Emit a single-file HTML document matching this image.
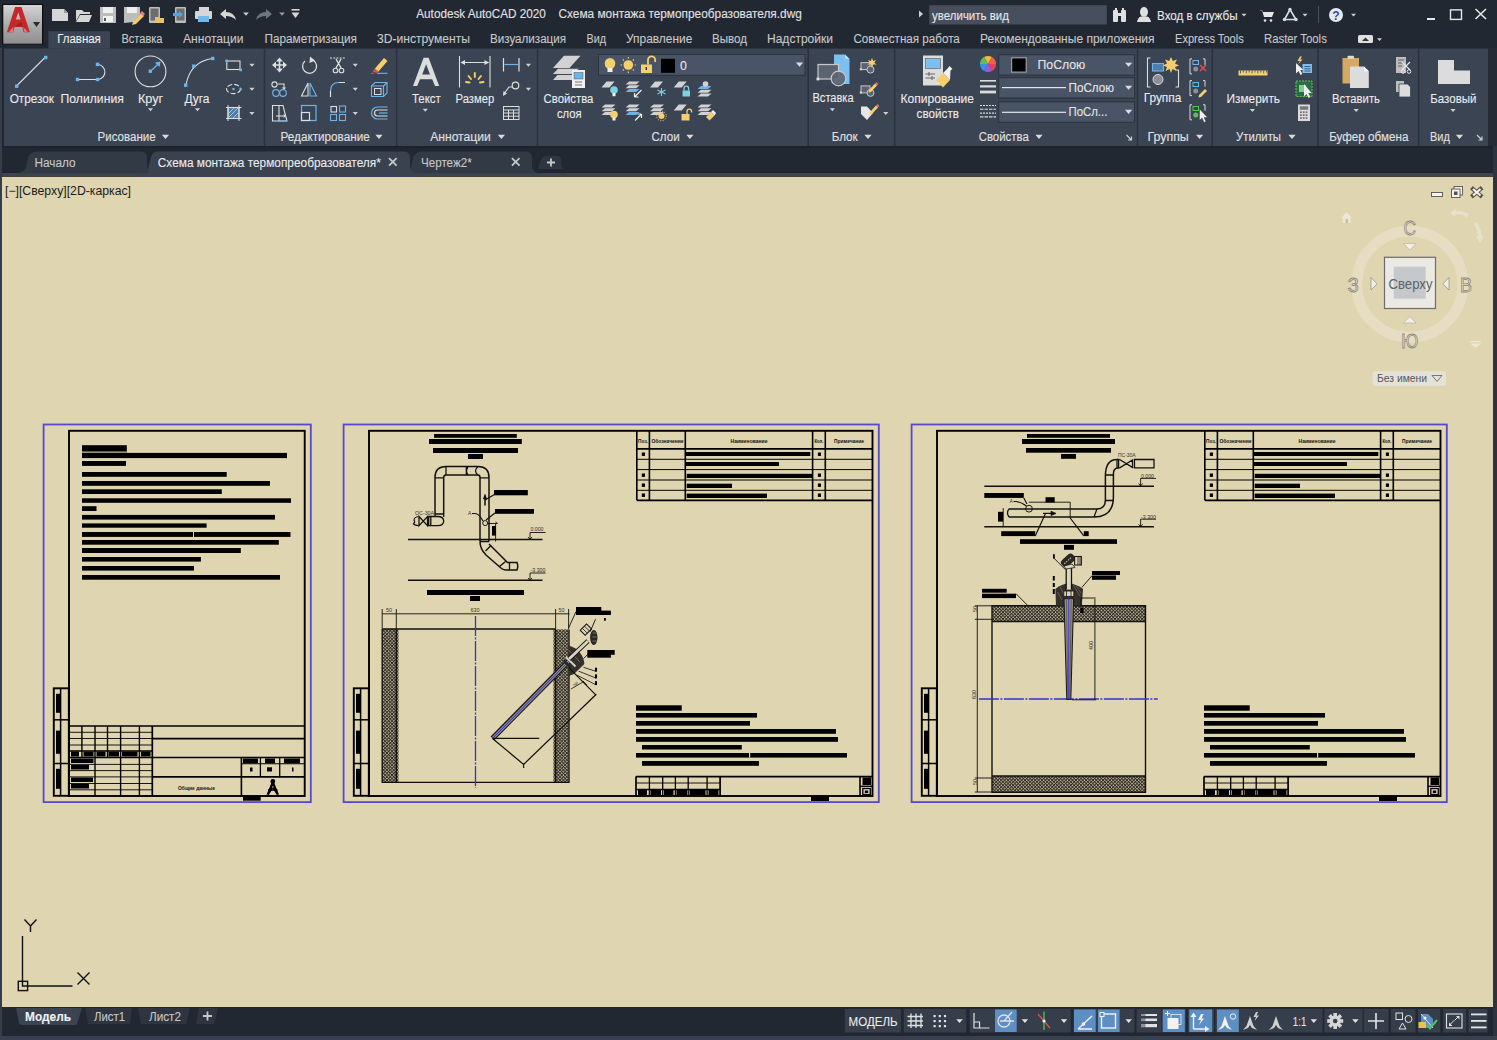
<!DOCTYPE html><html><head><meta charset="utf-8"><style>html,body{margin:0;padding:0;background:#222733;overflow:hidden}svg{display:block}</style></head><body>
<svg width="1497" height="1040" viewBox="0 0 1497 1040" font-family='"Liberation Sans", sans-serif'>
<rect x="0" y="0" width="1497" height="1040" fill="#222832" />
<rect x="0" y="48" width="2" height="992" fill="#363e4b" />
<rect x="4" y="48.5" width="1484" height="97.5" fill="#3b4453" />
<rect x="1488" y="48" width="9" height="98" fill="#262b35" />
<rect x="2" y="146" width="1495" height="31" fill="#222832" />
<rect x="2" y="146" width="1491" height="2" fill="#1d222b" />
<rect x="2" y="171.5" width="1491" height="1.5" fill="#1f2530" />
<rect x="2" y="173" width="1491" height="3.2" fill="#3b4452" />
<rect x="2" y="176.2" width="1491" height="1" fill="#4a463c" />
<rect x="2" y="177" width="1491" height="830" fill="#dfd5b0" />
<rect x="1493" y="146" width="4" height="894" fill="#2d3440" />
<rect x="2" y="1007" width="1491" height="29" fill="#222832" />
<rect x="0" y="1036" width="1497" height="4" fill="#394150" />
<defs><linearGradient id="appg" x1="0" y1="0" x2="0" y2="1"><stop offset="0" stop-color="#d4d4d4"/><stop offset="0.55" stop-color="#a9a9a9"/><stop offset="1" stop-color="#8f8f8f"/></linearGradient><linearGradient id="redA" x1="0" y1="0" x2="1" y2="1"><stop offset="0" stop-color="#e0262b"/><stop offset="1" stop-color="#a81a1e"/></linearGradient></defs>
<rect x="2" y="3.9" width="41.3" height="40.5" fill="#0e0e0e" />
<rect x="3.3" y="5" width="38.7" height="38.7" fill="url(#appg)" />
<path d="M6.9,32.2 L15.1,7.1 L21.5,7.1 L29.9,32.2 L23.6,32.2 L22.2,26.8 L14.6,26.8 L13.4,32.2 Z M15.8,19.5 L20.6,19.5 L18.3,12.4 Z" fill="#c8262a" fill-rule="evenodd"/>
<path d="M9,32 L13.2,27 L13.4,32.2 Z M24.5,32 L23,27 L28,31.5 Z" fill="#e07a78"/><path d="M14.6,26.8 Q18,23 22.2,22 L22.2,26.8 Z" fill="#a81c20"/>
<path d="M33,22 L40,22 L36.5,27 Z" fill="#2a2a2a"/>
<path d="M52,9 L64,9 L68,13 L68,21 L52,21 Z" fill="#d6d6d6"/><path d="M64,9 L64,13 L68,13" fill="#9a9a9a"/>
<path d="M76,10 L82,10 L84,12 L90,12 L90,14 L80,14 L76,21 Z" fill="#d6d6d6"/><path d="M80,15 L92,15 L89,22 L76,22 Z" fill="#d6d6d6"/>
<path d="M100,7 L116,7 L116,23 L100,23 Z" fill="#bdbdbd"/><rect x="103" y="7" width="10" height="6" fill="#eeeeee"/><rect x="103" y="16" width="10" height="6" fill="#f2f2f2"/><rect x="104" y="18" width="2" height="3" fill="#555"/>
<path d="M124,7 L140,7 L140,14 L134,22 L124,23 Z" fill="#bdbdbd"/><rect x="127" y="7" width="10" height="6" fill="#eeeeee"/><path d="M133,22 L141,13 L144,16 L136,24 L132,25 Z" fill="#f2c870"/><path d="M140,13 L142,11 L145,14 L143,16 Z" fill="#e27c8a"/>
<rect x="149" y="7" width="11" height="16" rx="1" fill="#bdbdbd"/><rect x="150.5" y="8.5" width="8" height="12" fill="#6d6d6d"/><path d="M155,17 L159,17 L160,18 L164,18 L164,23 L155,23 Z" fill="#f0c060"/>
<rect x="175" y="7" width="11" height="16" rx="1" fill="#bdbdbd"/><rect x="176.5" y="8.5" width="8" height="12" fill="#6d6d6d"/><path d="M173,13 L179,13 L179,11 L183,14.5 L179,18 L179,16 L173,16 Z" fill="#4aa8e8"/>
<rect x="199" y="7" width="10" height="5" fill="#d6d6d6"/><rect x="195" y="11" width="17" height="8" rx="1" fill="#d6d6d6"/><rect x="198" y="16" width="11" height="6" fill="#72b8ec"/>
<path d="M220,14 L226,9 L226,12 Q234,12 236,20 Q232,16 226,16 L226,19 Z" fill="#d6d6d6"/>
<path d="M243.2,12.46 L248.8,12.46 L246,15.68 Z" fill="#cfcfcf"/>
<path d="M272,14 L266,9 L266,12 Q258,12 256,20 Q260,16 266,16 L266,19 Z" fill="#6f757e"/>
<path d="M279.2,12.46 L284.8,12.46 L282,15.68 Z" fill="#9aa0a8"/>
<rect x="291.5" y="9" width="8" height="1.6" fill="#d6d6d6"/><path d="M291.5,12.5 L299.5,12.5 L295.5,18 Z" fill="#d6d6d6"/>
<text x="416.3" y="18.3" font-size="12.5" fill="#e2e2e2" textLength="129.6" lengthAdjust="spacingAndGlyphs" stroke="#e2e2e2" stroke-width="0.1" >Autodesk AutoCAD 2020</text>
<text x="558.5" y="18.3" font-size="12.5" fill="#e2e2e2" textLength="243.3" lengthAdjust="spacingAndGlyphs" stroke="#e2e2e2" stroke-width="0.1" >Схема монтажа термопреобразователя.dwg</text>
<path d="M919,10.5 L923,14 L919,17.5 Z" fill="#cfcfcf"/>
<rect x="929.2" y="5.2" width="177.6" height="19.3" fill="#474f5e" />
<text x="932" y="19.5" font-size="12.5" fill="#e8e8e8" textLength="77" lengthAdjust="spacingAndGlyphs" stroke="#e8e8e8" stroke-width="0.1" >увеличить вид</text>
<g fill="#e0e0e0"><rect x="1113" y="10" width="5" height="12" rx="1"/><rect x="1121" y="10" width="5" height="12" rx="1"/><rect x="1115" y="8" width="2" height="3"/><rect x="1122" y="8" width="2" height="3"/><rect x="1117" y="13" width="5" height="3"/></g>
<g fill="#e0e0e0"><ellipse cx="1144" cy="12" rx="4" ry="5"/><path d="M1137,22 Q1138,17 1141,16.5 L1147,16.5 Q1150,17 1151,22 Z"/></g>
<text x="1157" y="19.5" font-size="12.5" fill="#e8e8e8" textLength="80.6" lengthAdjust="spacingAndGlyphs" stroke="#e8e8e8" stroke-width="0.1" >Вход в службы</text>
<path d="M1241.5,13.625 L1246.5,13.625 L1244,16.5 Z" fill="#cfcfcf"/>
<g fill="#e6e6e6"><path d="M1259,10 L1262,10 L1264,17 L1272,17 L1274,12 L1263,12 L1262.5,10.5 Z"/><circle cx="1265" cy="20.5" r="1.3"/><circle cx="1271" cy="20.5" r="1.3"/></g>
<g stroke="#d8dce8" stroke-width="1.6" fill="none"><path d="M1290,9.5 L1284.5,19.5 L1296,19.5 Z"/></g><g fill="#d8dce8"><circle cx="1290" cy="9.5" r="1.7"/><circle cx="1284.5" cy="19.5" r="1.7"/><circle cx="1296" cy="19.5" r="1.7"/></g>
<path d="M1302.5,13.625 L1307.5,13.625 L1305,16.5 Z" fill="#cfcfcf"/>
<rect x="1318" y="6" width="1" height="17" fill="#4a505c" />
<circle cx="1336" cy="15" r="7" fill="#e8e8f0"/><text x="1336" y="19.5" font-size="12" font-weight="bold" fill="#2f4fa0" text-anchor="middle">?</text>
<path d="M1351.0,13.625 L1356.0,13.625 L1353.5,16.5 Z" fill="#cfcfcf"/>
<rect x="1427" y="18" width="8" height="2" fill="#e6e6e6" />
<rect x="1450.5" y="9.9" width="11" height="9.5" fill="none" stroke="#e6e6e6" stroke-width="1.4"/>
<path d="M1475.5,9 L1486,19 M1486,9 L1475.5,19" stroke="#e6e6e6" stroke-width="1.6"/>
<rect x="48.4" y="31.2" width="61.6" height="17.5" fill="#3b4453" />
<text x="57.2" y="43.2" font-size="12.5" fill="#f0f0e8" textLength="43.6" lengthAdjust="spacingAndGlyphs" stroke="#f0f0e8" stroke-width="0.1" >Главная</text>
<text x="121.4" y="43.2" font-size="12.5" fill="#c9c9c9" textLength="41.1" lengthAdjust="spacingAndGlyphs" stroke="#c9c9c9" stroke-width="0.1" >Вставка</text>
<text x="183" y="43.2" font-size="12.5" fill="#c9c9c9" textLength="60.5" lengthAdjust="spacingAndGlyphs" stroke="#c9c9c9" stroke-width="0.1" >Аннотации</text>
<text x="264.5" y="43.2" font-size="12.5" fill="#c9c9c9" textLength="92.5" lengthAdjust="spacingAndGlyphs" stroke="#c9c9c9" stroke-width="0.1" >Параметризация</text>
<text x="377" y="43.2" font-size="12.5" fill="#c9c9c9" textLength="93" lengthAdjust="spacingAndGlyphs" stroke="#c9c9c9" stroke-width="0.1" >3D-инструменты</text>
<text x="490" y="43.2" font-size="12.5" fill="#c9c9c9" textLength="76" lengthAdjust="spacingAndGlyphs" stroke="#c9c9c9" stroke-width="0.1" >Визуализация</text>
<text x="586.5" y="43.2" font-size="12.5" fill="#c9c9c9" textLength="19.5" lengthAdjust="spacingAndGlyphs" stroke="#c9c9c9" stroke-width="0.1" >Вид</text>
<text x="626" y="43.2" font-size="12.5" fill="#c9c9c9" textLength="66.3" lengthAdjust="spacingAndGlyphs" stroke="#c9c9c9" stroke-width="0.1" >Управление</text>
<text x="712" y="43.2" font-size="12.5" fill="#c9c9c9" textLength="35" lengthAdjust="spacingAndGlyphs" stroke="#c9c9c9" stroke-width="0.1" >Вывод</text>
<text x="767" y="43.2" font-size="12.5" fill="#c9c9c9" textLength="66" lengthAdjust="spacingAndGlyphs" stroke="#c9c9c9" stroke-width="0.1" >Надстройки</text>
<text x="853.4" y="43.2" font-size="12.5" fill="#c9c9c9" textLength="106.4" lengthAdjust="spacingAndGlyphs" stroke="#c9c9c9" stroke-width="0.1" >Совместная работа</text>
<text x="980" y="43.2" font-size="12.5" fill="#c9c9c9" textLength="174.6" lengthAdjust="spacingAndGlyphs" stroke="#c9c9c9" stroke-width="0.1" >Рекомендованные приложения</text>
<text x="1175" y="43.2" font-size="12.5" fill="#c9c9c9" textLength="68.7" lengthAdjust="spacingAndGlyphs" stroke="#c9c9c9" stroke-width="0.1" >Express Tools</text>
<text x="1264" y="43.2" font-size="12.5" fill="#c9c9c9" textLength="62.8" lengthAdjust="spacingAndGlyphs" stroke="#c9c9c9" stroke-width="0.1" >Raster Tools</text>
<rect x="1358" y="35" width="15" height="8" rx="1.5" fill="#e0e0e0"/><path d="M1362,41 L1365.5,37.5 L1369,41 Z" fill="#333"/>
<path d="M1377.0,38.125 L1382.0,38.125 L1379.5,41.0 Z" fill="#cfcfcf"/>
<rect x="263.75" y="48.5" width="1.5" height="97.5" fill="#2b313c" />
<rect x="395.95" y="48.5" width="1.5" height="97.5" fill="#2b313c" />
<rect x="536.75" y="48.5" width="1.5" height="97.5" fill="#2b313c" />
<rect x="807.45" y="48.5" width="1.5" height="97.5" fill="#2b313c" />
<rect x="893.95" y="48.5" width="1.5" height="97.5" fill="#2b313c" />
<rect x="1136.75" y="48.5" width="1.5" height="97.5" fill="#2b313c" />
<rect x="1211.55" y="48.5" width="1.5" height="97.5" fill="#2b313c" />
<rect x="1317.25" y="48.5" width="1.5" height="97.5" fill="#2b313c" />
<rect x="1417.85" y="48.5" width="1.5" height="97.5" fill="#2b313c" />
<text x="9.7" y="102.9" font-size="12.3" fill="#ececec" textLength="44.3" lengthAdjust="spacingAndGlyphs" stroke="#ececec" stroke-width="0.1" >Отрезок</text>
<text x="60.6" y="102.9" font-size="12.3" fill="#ececec" textLength="63.2" lengthAdjust="spacingAndGlyphs" stroke="#ececec" stroke-width="0.1" >Полилиния</text>
<text x="138" y="102.8" font-size="12.3" fill="#ececec" textLength="25" lengthAdjust="spacingAndGlyphs" stroke="#ececec" stroke-width="0.1" >Круг</text>
<text x="184.5" y="102.8" font-size="12.3" fill="#ececec" textLength="25" lengthAdjust="spacingAndGlyphs" stroke="#ececec" stroke-width="0.1" >Дуга</text>
<text x="411.9" y="102.8" font-size="12.3" fill="#ececec" textLength="28.9" lengthAdjust="spacingAndGlyphs" stroke="#ececec" stroke-width="0.1" >Текст</text>
<text x="455.6" y="102.8" font-size="12.3" fill="#ececec" textLength="38.7" lengthAdjust="spacingAndGlyphs" stroke="#ececec" stroke-width="0.1" >Размер</text>
<text x="543.6" y="102.8" font-size="12.3" fill="#ececec" textLength="49.8" lengthAdjust="spacingAndGlyphs" stroke="#ececec" stroke-width="0.1" >Свойства</text>
<text x="557" y="117.6" font-size="12.3" fill="#ececec" textLength="24.6" lengthAdjust="spacingAndGlyphs" stroke="#ececec" stroke-width="0.1" >слоя</text>
<text x="812.5" y="102.3" font-size="12.3" fill="#ececec" textLength="41.1" lengthAdjust="spacingAndGlyphs" stroke="#ececec" stroke-width="0.1" >Вставка</text>
<text x="900.5" y="102.8" font-size="12.3" fill="#ececec" textLength="73.5" lengthAdjust="spacingAndGlyphs" stroke="#ececec" stroke-width="0.1" >Копирование</text>
<text x="916.6" y="117.8" font-size="12.3" fill="#ececec" textLength="42.4" lengthAdjust="spacingAndGlyphs" stroke="#ececec" stroke-width="0.1" >свойств</text>
<text x="1143.7" y="102.3" font-size="12.3" fill="#ececec" textLength="37.6" lengthAdjust="spacingAndGlyphs" stroke="#ececec" stroke-width="0.1" >Группа</text>
<text x="1226.5" y="102.6" font-size="12.3" fill="#ececec" textLength="53.5" lengthAdjust="spacingAndGlyphs" stroke="#ececec" stroke-width="0.1" >Измерить</text>
<text x="1332" y="102.6" font-size="12.3" fill="#ececec" textLength="48" lengthAdjust="spacingAndGlyphs" stroke="#ececec" stroke-width="0.1" >Вставить</text>
<text x="1430.3" y="102.6" font-size="12.3" fill="#ececec" textLength="46.2" lengthAdjust="spacingAndGlyphs" stroke="#ececec" stroke-width="0.1" >Базовый</text>
<text x="97.6" y="141" font-size="12.3" fill="#e2e2e2" textLength="58" lengthAdjust="spacingAndGlyphs" stroke="#e2e2e2" stroke-width="0.1" >Рисование</text>
<path d="M161.9,134.82000000000002 L169.1,134.82000000000002 L165.5,138.96 Z" fill="#dcdcdc"/>
<text x="280.5" y="141" font-size="12.3" fill="#e2e2e2" textLength="89.2" lengthAdjust="spacingAndGlyphs" stroke="#e2e2e2" stroke-width="0.1" >Редактирование</text>
<path d="M375.4,134.82000000000002 L382.6,134.82000000000002 L379,138.96 Z" fill="#dcdcdc"/>
<text x="430.2" y="141" font-size="12.3" fill="#e2e2e2" textLength="60.5" lengthAdjust="spacingAndGlyphs" stroke="#e2e2e2" stroke-width="0.1" >Аннотации</text>
<path d="M497.79999999999995,134.82000000000002 L505.0,134.82000000000002 L501.4,138.96 Z" fill="#dcdcdc"/>
<text x="651.5" y="141" font-size="12.3" fill="#e2e2e2" textLength="28.1" lengthAdjust="spacingAndGlyphs" stroke="#e2e2e2" stroke-width="0.1" >Слои</text>
<path d="M686.3,134.82000000000002 L693.5,134.82000000000002 L689.9,138.96 Z" fill="#dcdcdc"/>
<text x="831.7" y="141" font-size="12.3" fill="#e2e2e2" textLength="26" lengthAdjust="spacingAndGlyphs" stroke="#e2e2e2" stroke-width="0.1" >Блок</text>
<path d="M864.4,134.82000000000002 L871.6,134.82000000000002 L868,138.96 Z" fill="#dcdcdc"/>
<text x="978.7" y="141" font-size="12.3" fill="#e2e2e2" textLength="50.1" lengthAdjust="spacingAndGlyphs" stroke="#e2e2e2" stroke-width="0.1" >Свойства</text>
<path d="M1035.4,134.82000000000002 L1042.6,134.82000000000002 L1039,138.96 Z" fill="#dcdcdc"/>
<text x="1147.4" y="141" font-size="12.3" fill="#e2e2e2" textLength="41.4" lengthAdjust="spacingAndGlyphs" stroke="#e2e2e2" stroke-width="0.1" >Группы</text>
<path d="M1196.0,134.82000000000002 L1203.1999999999998,134.82000000000002 L1199.6,138.96 Z" fill="#dcdcdc"/>
<text x="1236" y="141" font-size="12.3" fill="#e2e2e2" textLength="45" lengthAdjust="spacingAndGlyphs" stroke="#e2e2e2" stroke-width="0.1" >Утилиты</text>
<path d="M1288.4,134.82000000000002 L1295.6,134.82000000000002 L1292,138.96 Z" fill="#dcdcdc"/>
<text x="1329.2" y="141" font-size="12.3" fill="#e2e2e2" textLength="79.2" lengthAdjust="spacingAndGlyphs" stroke="#e2e2e2" stroke-width="0.1" >Буфер обмена</text>
<text x="1430" y="141" font-size="12.3" fill="#e2e2e2" textLength="19.8" lengthAdjust="spacingAndGlyphs" stroke="#e2e2e2" stroke-width="0.1" >Вид</text>
<path d="M1455.9,134.82000000000002 L1463.1,134.82000000000002 L1459.5,138.96 Z" fill="#dcdcdc"/>
<path d="M147.9,108.27 L153.1,108.27 L150.5,111.26 Z" fill="#d0d0d0"/>
<path d="M194.9,108.27 L200.1,108.27 L197.5,111.26 Z" fill="#d0d0d0"/>
<path d="M422.7,108.77 L427.90000000000003,108.77 L425.3,111.76 Z" fill="#d0d0d0"/>
<path d="M829.8,108.16999999999999 L835.0,108.16999999999999 L832.4,111.16 Z" fill="#d0d0d0"/>
<path d="M1249.8000000000002,108.97 L1255.0,108.97 L1252.4,111.96000000000001 Z" fill="#d0d0d0"/>
<path d="M1353.6000000000001,108.97 L1358.8,108.97 L1356.2,111.96000000000001 Z" fill="#d0d0d0"/>
<path d="M1450.4,108.97 L1455.6,108.97 L1453,111.96000000000001 Z" fill="#d0d0d0"/>
<path d="M1126.5,135 L1131.5,140 M1131.5,136.5 L1131.5,140 L1128.0,140" stroke="#cfcfcf" stroke-width="1.2" fill="none"/>
<path d="M1477,135 L1482,140 M1482,136.5 L1482,140 L1478.5,140" stroke="#cfcfcf" stroke-width="1.2" fill="none"/>
<path d="M17,85.5 L45,57.5" stroke="#dedede" stroke-width="1.1"/>
<rect x="15" y="84.5" width="3.4" height="3.4" fill="#6cb4ec" />
<rect x="44" y="55.8" width="3.4" height="3.4" fill="#6cb4ec" />
<path d="M79,79.5 L96,79.5 M98.5,64.5 A7.6,7.6 0 0 1 98.5,79.5" stroke="#dedede" stroke-width="1.1" fill="none"/>
<rect x="75.8" y="77.8" width="3.4" height="3.4" fill="#6cb4ec" />
<rect x="95.8" y="77.8" width="3.4" height="3.4" fill="#6cb4ec" />
<rect x="95.8" y="62.7" width="3.4" height="3.4" fill="#6cb4ec" />
<circle cx="150.5" cy="71.4" r="15.4" stroke="#dedede" stroke-width="1.1" fill="none"/>
<rect x="148.6" y="69.5" width="3.4" height="3.4" fill="#6cb4ec" />
<path d="M152,70 L159,63" stroke="#6cb4ec" stroke-width="1.3"/><path d="M160.5,61.5 L155,62.5 L159.5,67 Z" fill="#6cb4ec"/>
<path d="M186,85 Q190,62 212,58.5" stroke="#dedede" stroke-width="1.1" fill="none"/>
<rect x="184" y="83.5" width="3.4" height="3.4" fill="#6cb4ec" />
<rect x="192" y="64.5" width="3.4" height="3.4" fill="#6cb4ec" />
<rect x="211" y="56.8" width="3.4" height="3.4" fill="#6cb4ec" />
<rect x="226.8" y="61" width="13.2" height="8.5" fill="none" stroke="#dedede" stroke-width="1.1"/>
<rect x="225.3" y="59.5" width="2.6" height="2.6" fill="#6cb4ec" />
<rect x="239.4" y="68.6" width="2.6" height="2.6" fill="#6cb4ec" />
<ellipse cx="233.5" cy="89" rx="7" ry="4.6" fill="none" stroke="#dedede" stroke-width="1.1" stroke-dasharray="5 2"/>
<rect x="232.4" y="88" width="2.2" height="2.2" fill="#6cb4ec" />
<rect x="239.6" y="88" width="2.2" height="2.2" fill="#6cb4ec" />
<rect x="228" y="107.5" width="11" height="11" fill="#4d7ea8" stroke="#dedede" stroke-width="1.1"/><path d="M226,107.5 L241.5,107.5 M226,118.5 L241.5,118.5 M228,105 L228,121 M239,105 L239,121" stroke="#dedede" stroke-width="1"/><path d="M229,117 L238,108 M229,113 L234,108 M233,118 L238,113" stroke="#9fd0f5" stroke-width="0.9"/>
<path d="M249.3,63.77 L254.5,63.77 L251.9,66.76 Z" fill="#d0d0d0"/>
<path d="M249.3,87.77 L254.5,87.77 L251.9,90.76 Z" fill="#d0d0d0"/>
<path d="M249.3,112.07 L254.5,112.07 L251.9,115.06 Z" fill="#d0d0d0"/>
<g fill="#dedede"><path d="M279.5,57.5 L283,61.5 L276,61.5 Z M279.5,72.5 L283,68.5 L276,68.5 Z M272,65 L276,61.5 L276,68.5 Z M287,65 L283,61.5 L283,68.5 Z"/></g><path d="M279.5,60 L279.5,70 M274.5,65 L284.5,65" stroke="#dedede" stroke-width="1.6"/>
<path d="M313.5,60.5 A7,7 0 1 1 305,61" stroke="#dedede" stroke-width="1.3" fill="none"/><path d="M310,56.5 L315,60.5 L309.5,63 Z" fill="#dedede"/>
<path d="M330,58 L346,58" stroke="#dedede" stroke-width="1.1" stroke-dasharray="2 1.2"/><path d="M336,59 L341,68 M341,59 L336,68" stroke="#dedede" stroke-width="1.4"/><circle cx="335.5" cy="70.5" r="2.3" fill="none" stroke="#dedede" stroke-width="1.1"/><circle cx="341.5" cy="70.5" r="2.3" fill="none" stroke="#dedede" stroke-width="1.1"/>
<path d="M352.7,63.77 L357.90000000000003,63.77 L355.3,66.76 Z" fill="#d0d0d0"/>
<path d="M374.5,69 L384,58 L387.5,61 L378,72 Z" fill="#f5cf6e"/><path d="M372.5,71.5 L375,68.5 L378.5,71.5 L376.5,73 Z" fill="#e0504a"/><path d="M377,73.3 L387.5,73.3" stroke="#6cb4ec" stroke-width="1.1"/><path d="M371,73.3 L374,73.3" stroke="#e0504a" stroke-width="1.1"/>
<g fill="none" stroke="#dedede" stroke-width="1.1"><circle cx="274.5" cy="84.5" r="2.6"/><path d="M278,84 L284,84 L284,88.5"/></g><path d="M282,87.5 L286,87.5 L284,90 Z" fill="#dedede"/><g fill="none" stroke="#6cb4ec" stroke-width="1.2"><circle cx="276" cy="93" r="3.3"/><circle cx="283" cy="93" r="3.3"/></g>
<path d="M308,83 L308,96 L301.5,96 Z" fill="none" stroke="#dedede" stroke-width="1.1"/><path d="M310,83 L316.5,96 L310,96 Z" fill="none" stroke="#6cb4ec" stroke-width="1.1"/>
<path d="M330.5,97 L330.5,91 Q330.5,82.5 339,82.5 L345,82.5" fill="none" stroke="#6cb4ec" stroke-width="1.2"/><path d="M339,82.5 L345,82.5 M330.5,91 L330.5,97" stroke="#dedede" stroke-width="1.1"/>
<path d="M352.7,87.77 L357.90000000000003,87.77 L355.3,90.76 Z" fill="#d0d0d0"/>
<g fill="none" stroke="#6cb4ec" stroke-width="1.1"><path d="M371.5,86 L375,82.5 L387,82.5 L387,93 L383.5,96.5 L371.5,96.5 Z"/><path d="M371.5,86 L383.5,86 L383.5,96.5 M383.5,86 L387,82.5"/></g><rect x="374.5" y="88.5" width="6.5" height="6" fill="none" stroke="#dedede" stroke-width="1"/>
<path d="M272.5,105.5 L279,105.5 L279,121 L272.5,121 Z M279,105.5 L283,105.5 L287,121 L279,121" fill="none" stroke="#dedede" stroke-width="1.1"/><path d="M276,116 L283,116" stroke="#dedede" stroke-width="1.1"/><path d="M283.5,114 L286,116 L283.5,118 Z" fill="#dedede"/><path d="M279,121 L287,121" stroke="#6cb4ec" stroke-width="1.2"/>
<rect x="301.5" y="105.5" width="14.5" height="15" fill="none" stroke="#6cb4ec" stroke-width="1.2"/><rect x="301.5" y="112.5" width="8" height="8" fill="none" stroke="#dedede" stroke-width="1.2"/>
<rect x="331" y="106.5" width="5.5" height="5.5" fill="none" stroke="#dedede" stroke-width="1.1"/><g fill="none" stroke="#6cb4ec" stroke-width="1.1"><rect x="330.5" y="106" width="0" height="0"/><rect x="339.5" y="106" width="6" height="6"/><rect x="330.5" y="114.5" width="6" height="6"/><rect x="339.5" y="114.5" width="6" height="6"/></g>
<path d="M352.7,112.07 L357.90000000000003,112.07 L355.3,115.06 Z" fill="#d0d0d0"/>
<g fill="none" stroke-width="1.2"><path d="M387.5,107 L377.5,107 A6,6 0 0 0 377.5,119 L387.5,119" stroke="#6cb4ec"/><path d="M387.5,110 L377.5,110 A3,3 0 0 0 377.5,116 L387.5,116" stroke="#dedede"/><path d="M387.5,113 L379,113" stroke="#6cb4ec"/><path d="M387.5,104.5 L377.5,104.5" stroke="none"/></g>
<path d="M413,86 L423.6,57.8 L428.6,57.8 L439.2,86 L435,86 L432.2,79.2 L420,79.2 L417.2,86 Z M422.2,74.6 L430,74.6 L426.1,64.3 Z" fill="#dcdcdc" fill-rule="evenodd"/>
<g stroke="#dedede" stroke-width="1.1"><path d="M459.5,56 L459.5,87.5 M490,56 L490,87.5 M461,62.5 L488.5,62.5"/></g><g fill="#dedede"><path d="M460.5,62.5 L465,60 L465,65 Z M489,62.5 L484.5,60 L484.5,65 Z"/></g>
<g stroke="#f5cf6e" stroke-width="1.9" stroke-linecap="round"><path d="M474.8,73 L474.8,77 M468.5,76 L471,79 M481,76 L478.5,79 M466,82 L469.5,82.5 M483.5,82 L480,82.5"/></g>
<path d="M503.5,58 L503.5,71.5 M519,58 L519,71.5" stroke="#dedede" stroke-width="1.2"/><path d="M504.5,64.5 L518,64.5" stroke="#6cb4ec" stroke-width="1.2"/>
<circle cx="515.5" cy="85.5" r="3.3" fill="none" stroke="#dedede" stroke-width="1.2"/><path d="M512.5,87 L509,87 L503.5,94.5" fill="none" stroke="#dedede" stroke-width="1.2"/><path d="M503,96 L503.5,91 L507,93.5 Z" fill="#dedede"/>
<g fill="none" stroke="#dedede" stroke-width="1"><rect x="503.5" y="106.5" width="15.5" height="13"/><path d="M503.5,110 L519,110 M503.5,113 L519,113 M503.5,116.2 L519,116.2 M508.5,110 L508.5,119.5 M513.5,110 L513.5,119.5"/></g>
<path d="M525.8,63.77 L531.0,63.77 L528.4,66.76 Z" fill="#d0d0d0"/>
<path d="M525.8,87.77 L531.0,87.77 L528.4,90.76 Z" fill="#d0d0d0"/>
<g fill="#d2d2d2"><path d="M553,68 L564,55.8 L580.5,55.8 L569.5,68 Z"/><path d="M553,74 L558,68.8 L579,68.8 L572,74 Z"/><path d="M553,80 L557.5,75 L572,75 L572,80 Z"/></g>
<rect x="572" y="70" width="13" height="18" fill="#f0f0f0"/><rect x="574" y="72.5" width="9" height="6.5" fill="#6cb4ec" stroke="#555" stroke-width="0.5"/><path d="M575,82 L582,82 M575,85 L582,85" stroke="#555" stroke-width="0.8"/>
<rect x="598" y="54" width="207.5" height="21.8" fill="#2c333e" />
<rect x="599" y="55" width="205.5" height="19.8" fill="#4a5467" />
<ellipse cx="610" cy="63.5" rx="5.3" ry="5.5" fill="#f5cf6e"/><rect x="607.5" y="68" width="5" height="4" fill="#f0f0f0"/>
<circle cx="628.3" cy="65" r="4.8" fill="#f5cf6e"/><g stroke="#f5cf6e" stroke-width="1.1"><path d="M628.3,57 L628.3,58.5 M628.3,71.5 L628.3,73 M620.5,65 L622,65 M634.5,65 L636,65 M622.8,59.5 L623.8,60.5 M632.8,69.5 L633.8,70.5 M633.8,59.5 L632.8,60.5 M623.8,69.5 L622.8,70.5"/></g>
<rect x="641" y="64.5" width="11" height="8.5" fill="#f5cf6e"/><path d="M648,64.5 L648,60 A3.6,3.6 0 0 1 655.2,60 L655.2,62" fill="none" stroke="#f5cf6e" stroke-width="1.8"/><rect x="645.6" y="67" width="1.4" height="3" fill="#333"/>
<rect x="661" y="58.8" width="14" height="14" fill="#000" />
<text x="680" y="69.8" font-size="12.3" fill="#e6e6e6" stroke="#e6e6e6" stroke-width="0.1" >0</text>
<path d="M795.9,62.52 L803.1,62.52 L799.5,66.66 Z" fill="#dcdcdc"/>
<path d="M601.5,87.5 L606.5,81.5 L614.5,81.5 L609.5,87.5 Z" fill="#d2d2d2"/>
<circle cx="614" cy="90" r="3.8" fill="#7dd3e0"/><rect x="612.5" y="93" width="3" height="3.2" fill="#f0f0f0"/>
<path d="M625.6,84.5 L629.1,81.5 L639.6,81.5 L636.1,84.5 Z" fill="#d2d2d2"/>
<path d="M625.6,88.3 L629.1,85.3 L639.6,85.3 L636.1,88.3 Z" fill="#d2d2d2"/>
<path d="M625.6,92.1 L629.1,89.1 L639.6,89.1 L636.1,92.1 Z" fill="#6cb4ec"/>
<path d="M641.5,90 L634.5,97 M634.5,97 L634.5,93 M634.5,97 L638.5,97" stroke="#f0f0f0" stroke-width="1.2" fill="none"/>
<path d="M650,87.5 L655,81.5 L663,81.5 L658,87.5 Z" fill="#d2d2d2"/>
<g stroke="#7dd3e0" stroke-width="1.1"><path d="M661.5,88 L661.5,96 M657.5,90 L665.5,94 M665.5,90 L657.5,94"/></g>
<path d="M673.7,87.5 L678.7,81.5 L686.7,81.5 L681.7,87.5 Z" fill="#d2d2d2"/>
<rect x="682.5" y="90.5" width="7.5" height="6" fill="#7dd3e0"/><path d="M684,90.5 L684,88.5 A2.3,2.3 0 0 1 688.6,88.5 L688.6,90.5" fill="none" stroke="#7dd3e0" stroke-width="1.3"/>
<path d="M697.5,89.0 L701.0,86.0 L711.5,86.0 L708.0,89.0 Z" fill="#6cb4ec"/>
<path d="M697.5,92.8 L701.0,89.8 L711.5,89.8 L708.0,92.8 Z" fill="#d2d2d2"/>
<path d="M697.5,96.6 L701.0,93.6 L711.5,93.6 L708.0,96.6 Z" fill="#d2d2d2"/>
<circle cx="705.5" cy="84" r="2.8" fill="#d2d2d2"/>
<path d="M601.5,107.5 L605.0,104.5 L615.5,104.5 L612.0,107.5 Z" fill="#d2d2d2"/>
<path d="M601.5,111.3 L605.0,108.3 L615.5,108.3 L612.0,111.3 Z" fill="#d2d2d2"/>
<path d="M601.5,115.1 L605.0,112.1 L615.5,112.1 L612.0,115.1 Z" fill="#d2d2d2"/>
<circle cx="614" cy="114.5" r="3.8" fill="#f5cf6e"/><rect x="612.5" y="117.5" width="3" height="3" fill="#f0f0f0"/>
<path d="M625.6,107.5 L629.1,104.5 L639.6,104.5 L636.1,107.5 Z" fill="#d2d2d2"/>
<path d="M625.6,111.3 L629.1,108.3 L639.6,108.3 L636.1,111.3 Z" fill="#d2d2d2"/>
<path d="M625.6,115.1 L629.1,112.1 L639.6,112.1 L636.1,115.1 Z" fill="#6cb4ec"/>
<path d="M635,120.5 L641.5,114 M641.5,114 L641.5,118 M641.5,114 L637.5,114" stroke="#f0f0f0" stroke-width="1.2" fill="none"/>
<path d="M650,107.5 L653.5,104.5 L664,104.5 L660.5,107.5 Z" fill="#d2d2d2"/>
<path d="M650,111.3 L653.5,108.3 L664,108.3 L660.5,111.3 Z" fill="#d2d2d2"/>
<path d="M650,115.1 L653.5,112.1 L664,112.1 L660.5,115.1 Z" fill="#d2d2d2"/>
<circle cx="661.5" cy="116" r="3" fill="#f5cf6e"/><circle cx="661.5" cy="116" r="4.8" fill="none" stroke="#f5cf6e" stroke-width="0.9" stroke-dasharray="1.2 1.3"/>
<path d="M673.7,110.5 L678.7,104.5 L686.7,104.5 L681.7,110.5 Z" fill="#d2d2d2"/>
<rect x="681.5" y="114" width="8" height="6.5" fill="#f5cf6e"/><path d="M687,114 L687,111.5 A2.3,2.3 0 0 1 691.6,111.5 L691.6,112.5" fill="none" stroke="#f5cf6e" stroke-width="1.3"/>
<path d="M697.5,107.5 L701.0,104.5 L711.5,104.5 L708.0,107.5 Z" fill="#d2d2d2"/>
<path d="M697.5,111.3 L701.0,108.3 L711.5,108.3 L708.0,111.3 Z" fill="#d2d2d2"/>
<path d="M697.5,115.1 L701.0,112.1 L711.5,112.1 L708.0,115.1 Z" fill="#d2d2d2"/>
<path d="M706,117 L711,112 L714.5,115.5 L709.5,120.5 Z" fill="#f5cf6e"/><path d="M711,112 L713,110 L716,113 L714.5,115.5 Z" fill="#f0f0f0"/>
<path d="M834,54.5 L845,54.5 L849.5,59 L849.5,84 L834,84 Z" fill="#7cc0f2"/><path d="M845,54.5 L845,59 L849.5,59" fill="#b9ddf7"/>
<rect x="818" y="64.5" width="20.5" height="14.5" fill="#5c6370" stroke="#c8c8c8" stroke-width="1.2"/><circle cx="838.5" cy="78.5" r="7.3" fill="#5c6370" fill-opacity="0.9" stroke="#c8c8c8" stroke-width="1.2"/>
<rect x="816.5" y="77.6" width="2.8" height="2.8" fill="#e0e0e0" />
<rect x="861" y="62.6" width="9" height="7" fill="#5c6370" stroke="#c8c8c8" stroke-width="1"/><circle cx="870.5" cy="69.6" r="3.5" fill="#5c6370" stroke="#c8c8c8" stroke-width="1"/>
<rect x="861" y="85.9" width="9" height="7" fill="#5c6370" stroke="#c8c8c8" stroke-width="1"/><circle cx="870.5" cy="92.9" r="3.5" fill="#5c6370" stroke="#c8c8c8" stroke-width="1"/>
<rect x="859.8" y="68.3" width="2" height="2" fill="#e0e0e0" />
<rect x="859.8" y="91.5" width="2" height="2" fill="#e0e0e0" />
<path d="M872,58 L873.2,61 L876,60 L874.3,62.8 L876.5,64.5 L873.2,64.5 L872,67.5 L870.8,64.5 L867.5,64.5 L869.7,62.8 L868,60 L870.8,61 Z" fill="#f5cf6e"/>
<path d="M869,90 L875,83.5 L877,85.5 L871,92 L868.5,92.5 Z" fill="#f5cf6e"/><path d="M875,83.5 L876.5,82 L878.5,84 L877,85.5 Z" fill="#e07070"/>
<path d="M861,106.5 L867,106.5 L873,113 L867,120 L861,114 Z" fill="#e6e6e6"/><path d="M870,112 L876,105.5 L878,107.5 L872,114 L869.5,114.5 Z" fill="#f5cf6e"/><path d="M876,105.5 L877.5,104 L879.5,106 L878,107.5 Z" fill="#e07070"/>
<path d="M883.1999999999999,112.07 L888.4,112.07 L885.8,115.06 Z" fill="#d0d0d0"/>
<rect x="923" y="55.5" width="20" height="30" fill="#dcdcdc"/><rect x="925.5" y="58.5" width="15" height="10" fill="#7cc0f2" stroke="#555" stroke-width="0.6"/><path d="M925.5,74 L935,74 M925.5,78 L935,78 M929,72 L929,76 M932,76 L932,80" stroke="#555" stroke-width="0.9"/>
<path d="M936,80 L943,73 L950,80 L943,87.5 Z" fill="#f5cf6e"/><path d="M943,73 L948,68 L949.5,66 L952.5,69 L950.5,70.5 L950,80 Z" fill="#f0f0f0"/>
<g transform="translate(988,64)"><path d="M0,0 L-3.9999999999999982,-6.92820323027551 A8,8 0 0 1 4.000000000000001,-6.928203230275509 Z" fill="#f5b83c"/><path d="M0,0 L4.000000000000001,-6.928203230275509 A8,8 0 0 1 8.0,0.0 Z" fill="#f0604a"/><path d="M0,0 L8.0,0.0 A8,8 0 0 1 4.000000000000001,6.928203230275509 Z" fill="#e84060"/><path d="M0,0 L4.000000000000001,6.928203230275509 A8,8 0 0 1 -3.9999999999999982,6.92820323027551 Z" fill="#9a5ae0"/><path d="M0,0 L-3.9999999999999982,6.92820323027551 A8,8 0 0 1 -8.0,9.797174393178826e-16 Z" fill="#3a90e8"/><path d="M0,0 L-8.0,9.797174393178826e-16 A8,8 0 0 1 -4.0000000000000036,-6.928203230275507 Z" fill="#5ac05a"/></g>
<rect x="980" y="80.0" width="16" height="1.6" fill="#dcdcdc" />
<rect x="980" y="85.3" width="16" height="2.2" fill="#dcdcdc" />
<rect x="980" y="90.6" width="16" height="2.8" fill="#dcdcdc" />
<path d="M980,105.5 L996,105.5" stroke="#dcdcdc" stroke-width="1.1" stroke-dasharray="2 1"/>
<path d="M980,109.3 L996,109.3" stroke="#dcdcdc" stroke-width="1.1" stroke-dasharray="3.5 1"/>
<path d="M980,113.1 L996,113.1" stroke="#dcdcdc" stroke-width="1.1" stroke-dasharray="2 1"/>
<path d="M980,116.9 L996,116.9" stroke="#dcdcdc" stroke-width="1.1" stroke-dasharray="3.5 1"/>
<rect x="998.2" y="54.2" width="136.8" height="21.4" fill="#2c333e" />
<rect x="999.2" y="55.2" width="134.8" height="19.4" fill="#4a5467" />
<path d="M1125.0,62.720000000000006 L1132.1999999999998,62.720000000000006 L1128.6,66.86 Z" fill="#dcdcdc"/>
<rect x="998.2" y="77.2" width="136.8" height="21.4" fill="#2c333e" />
<rect x="999.2" y="78.2" width="134.8" height="19.4" fill="#4a5467" />
<path d="M1125.0,85.72 L1132.1999999999998,85.72 L1128.6,89.86 Z" fill="#dcdcdc"/>
<rect x="998.2" y="101.3" width="136.8" height="21.4" fill="#2c333e" />
<rect x="999.2" y="102.3" width="134.8" height="19.4" fill="#4a5467" />
<path d="M1125.0,109.82 L1132.1999999999998,109.82 L1128.6,113.96 Z" fill="#dcdcdc"/>
<rect x="1011" y="57.2" width="15.8" height="15.5" fill="#9a9a9a" />
<rect x="1012.2" y="58.4" width="13.4" height="13.1" fill="#000" />
<text x="1037.6" y="68.9" font-size="12.3" fill="#e6e6e6" textLength="47.6" lengthAdjust="spacingAndGlyphs" stroke="#e6e6e6" stroke-width="0.1" >ПоСлою</text>
<rect x="1002" y="87" width="64" height="1.2" fill="#e6e6e6" />
<text x="1068.5" y="91.8" font-size="12.3" fill="#e6e6e6" textLength="45.5" lengthAdjust="spacingAndGlyphs" stroke="#e6e6e6" stroke-width="0.1" >ПоСлою</text>
<rect x="1002" y="111.7" width="64" height="1.2" fill="#e6e6e6" />
<text x="1068.5" y="116" font-size="12.3" fill="#e6e6e6" textLength="38.8" lengthAdjust="spacingAndGlyphs" stroke="#e6e6e6" stroke-width="0.1" >ПоСл...</text>
<path d="M1150.5,58 L1147.5,58 L1147.5,87 L1150.5,87 M1175.5,70 L1178.5,70 L1178.5,87 L1175.5,87" fill="none" stroke="#dcdcdc" stroke-width="1.1"/>
<rect x="1152.5" y="63.5" width="11" height="7.5" fill="#4d7ea8" stroke="#6cb4ec" stroke-width="1.1"/><circle cx="1158" cy="79.5" r="5" fill="#8a8f98" stroke="#dcdcdc" stroke-width="1"/>
<path d="M1171,57 L1172.8,61 L1177,59.5 L1175,63.5 L1179,65.5 L1175,67 L1176.5,71 L1172.5,69 L1171,73 L1169.5,69 L1165.5,71 L1167,67 L1163,65.5 L1167,63.5 L1165,59.5 L1169.2,61 Z" fill="#f5cf6e"/>
<path d="M1192,58.9 L1190,58.9 L1190,73.9 L1192,73.9 M1203,58.9 L1205,58.9 L1205,64.9" fill="none" stroke="#dcdcdc" stroke-width="1"/>
<path d="M1192,80.6 L1190,80.6 L1190,95.6 L1192,95.6 M1203,80.6 L1205,80.6 L1205,86.6" fill="none" stroke="#dcdcdc" stroke-width="1"/>
<path d="M1192,104.8 L1190,104.8 L1190,119.8 L1192,119.8 M1203,104.8 L1205,104.8 L1205,110.8" fill="none" stroke="#dcdcdc" stroke-width="1"/>
<rect x="1193" y="60.5" width="5.5" height="4" fill="none" stroke="#6cb4ec" stroke-width="1"/><circle cx="1195.7" cy="69" r="2.5" fill="#8a8f98"/><path d="M1200,65 L1206,71 M1206,65 L1200,71" stroke="#e04a4a" stroke-width="1.6"/>
<rect x="1193" y="82.5" width="5.5" height="4" fill="none" stroke="#6cb4ec" stroke-width="1"/><circle cx="1195.7" cy="91" r="2.5" fill="#8a8f98"/><path d="M1199,95 L1205,89 L1207,91 L1201,97 L1198.5,97.5 Z" fill="#f5cf6e"/>
<rect x="1193" y="106.5" width="5.5" height="4" fill="none" stroke="#5ac05a" stroke-width="1"/><circle cx="1195.7" cy="115" r="2.5" fill="#5ac05a"/><path d="M1199.5,109 L1199.5,120.5 L1202,118 L1204,122.5 L1206,121.5 L1204,117.5 L1207.5,117.5 Z" fill="#f0f0f0" stroke="#333" stroke-width="0.4"/>
<rect x="1238.5" y="70.5" width="29" height="5" fill="#f5cf6e" />
<path d="M1240.5,70.5 L1240.5,73.3 M1243.4,70.5 L1243.4,72.5 M1246.3,70.5 L1246.3,73.3 M1249.2,70.5 L1249.2,72.5 M1252.1,70.5 L1252.1,73.3 M1255.0,70.5 L1255.0,72.5 M1257.9,70.5 L1257.9,73.3 M1260.8,70.5 L1260.8,72.5 M1263.7,70.5 L1263.7,73.3 M1266.6,70.5 L1266.6,72.5" stroke="#3b4453" stroke-width="0.8"/>
<path d="M1296,63 L1296,73.5 L1298.5,71 L1300.5,75 L1302.3,74 L1300.3,70 L1303.5,70 Z" fill="#f0f0f0"/><rect x="1302.5" y="64" width="9.5" height="9" fill="#7cc0f2"/><path d="M1304.5,66.5 L1310.5,66.5 M1304.5,68.8 L1310.5,68.8 M1304.5,71 L1310.5,71" stroke="#3b4453" stroke-width="0.8"/><path d="M1300,56.5 L1297.5,61 L1300,61 L1298,64.5 L1302.5,59.5 L1300.2,59.5 L1302,56.5 Z" fill="#f5cf6e"/>
<rect x="1296" y="81" width="16" height="15.5" fill="#2c6b4a" stroke="#5ac05a" stroke-width="1" stroke-dasharray="2 1"/><path d="M1299,85 L1306,85 L1306,92 L1299,92 Z" fill="#7ad08a"/><path d="M1304,84 L1304,96.5 L1306.5,94 L1308.5,98 L1310.3,97 L1308.3,93 L1311.5,93 Z" fill="#f0f0f0"/>
<rect x="1298" y="104.5" width="12" height="16.5" fill="#dcdcdc"/><rect x="1299.8" y="106.3" width="8.4" height="3.5" fill="#777"/><rect x="1300.0" y="111.3" width="1.8" height="1.8" fill="#777"/><rect x="1300.0" y="114.2" width="1.8" height="1.8" fill="#777"/><rect x="1300.0" y="117.1" width="1.8" height="1.8" fill="#777"/><rect x="1302.8" y="111.3" width="1.8" height="1.8" fill="#777"/><rect x="1302.8" y="114.2" width="1.8" height="1.8" fill="#777"/><rect x="1302.8" y="117.1" width="1.8" height="1.8" fill="#777"/><rect x="1305.6" y="111.3" width="1.8" height="1.8" fill="#777"/><rect x="1305.6" y="114.2" width="1.8" height="1.8" fill="#777"/><rect x="1305.6" y="117.1" width="1.8" height="1.8" fill="#777"/>
<path d="M1342.5,58 L1359,58 L1359,83.5 L1342.5,83.5 Z" fill="#d6a864"/><rect x="1347.5" y="55.8" width="6.5" height="3" rx="1" fill="#dcdcdc"/><path d="M1350,66.5 L1364,66.5 L1368.8,71.3 L1368.8,88 L1350,88 Z" fill="#dcdcdc"/><path d="M1364,66.5 L1364,71.3 L1368.8,71.3 Z" fill="#f4f4f4"/>
<path d="M1396,57 L1406,57 L1406,73 L1396,73 Z" fill="#bdbdbd"/><path d="M1398,60 L1404,60 M1398,63 L1404,63 M1398,66 L1402,66" stroke="#555" stroke-width="0.9"/><path d="M1402,62 L1410,70 M1410,62 L1402,70" stroke="#e6e6e6" stroke-width="1.2"/><circle cx="1403" cy="71.5" r="1.8" fill="none" stroke="#e6e6e6" stroke-width="1"/><circle cx="1409" cy="71.5" r="1.8" fill="none" stroke="#e6e6e6" stroke-width="1"/>
<path d="M1396,81 L1404,81 L1404,92 L1396,92 Z" fill="#bdbdbd"/><path d="M1399,84 L1407.5,84 L1410.5,87 L1410.5,97 L1399,97 Z" fill="#dcdcdc" stroke="#3b4453" stroke-width="0.8"/>
<path d="M1438,60 L1454,60 L1454,70.5 L1470,70.5 L1470,84 L1438,84 Z" fill="#dcdcdc"/>
<path d="M12,173.5 Q24,173.5 26,167.5 L28,157.5 Q30,151.5 38,151.5 L141,151.5 Q147,151.5 147,157.5 L147,167.5 Q149,173.5 161,173.5 Z" fill="#323a46"/>
<path d="M30,173.5 Q28,173.5 30,167.5 L32,157.5 Q34,151.5 42,151.5 L540,151.5 Q546,151.5 546,157.5 L546,167.5 Q548,173.5 546,173.5 Z" fill="#00000000"/>
<path d="M401,173.5 Q409,173.5 411,167.5 L413,157.5 Q415,151.5 423,151.5 L526,151.5 Q532,151.5 532,157.5 L532,167.5 Q534,173.5 542,173.5 Z" fill="#323a46"/>
<path d="M137,173.5 L149,173.5 Q147,173.5 149,165 L151,157 Q152.5,151.5 158,151.5 L404,151.5 Q410,151.5 410,158 L410,167 Q411,173.5 418,173.5 L420,173.5 L420,177 L137,177 Z" fill="#3a4250"/>
<path d="M538,169 Q541,156 546,156 L557,156 Q561,156 561,160 L561,163 Q561,169 565,169 Z" fill="#2f3642"/>
<text x="34.5" y="167.3" font-size="12.3" fill="#c8c8c8" textLength="41.2" lengthAdjust="spacingAndGlyphs" stroke="#c8c8c8" stroke-width="0.1" >Начало</text>
<text x="157.8" y="167.3" font-size="12.3" fill="#ececec" textLength="223" lengthAdjust="spacingAndGlyphs" stroke="#ececec" stroke-width="0.1" >Схема монтажа термопреобразователя*</text>
<text x="421" y="167.3" font-size="12.3" fill="#c8c8c8" textLength="50.7" lengthAdjust="spacingAndGlyphs" stroke="#c8c8c8" stroke-width="0.1" >Чертеж2*</text>
<path d="M389.0,158.2 L396.6,165.7 M396.6,158.2 L389.0,165.7" stroke="#c8c8c8" stroke-width="1.7"/>
<path d="M511.90000000000003,158.2 L519.5,165.7 M519.5,158.2 L511.90000000000003,165.7" stroke="#c8c8c8" stroke-width="1.7"/>
<path d="M547,162.5 L555,162.5 M551,158.5 L551,166.5" stroke="#c8c8c8" stroke-width="1.8"/>
<text x="5" y="194.5" font-size="12" fill="#1a1a1a" textLength="126" lengthAdjust="spacingAndGlyphs" >[−][Сверху][2D-каркас]</text>
<rect x="1431.5" y="192.5" width="11" height="4" fill="#f2f2f2" stroke="#5a5248" stroke-width="0.9"/>
<rect x="1454" y="186.5" width="8.5" height="8.5" fill="#f2f2f2" stroke="#5a5248" stroke-width="0.9"/><rect x="1451.5" y="189" width="8.5" height="8.5" fill="#f2f2f2" stroke="#5a5248" stroke-width="0.9"/><rect x="1454" y="191.5" width="3.5" height="3.5" fill="#5a5248"/>
<path d="M1473,189 L1480.5,195.5 M1480.5,189 L1473,195.5" stroke="#5a5248" stroke-width="4.2" stroke-linecap="square"/><path d="M1473,189 L1480.5,195.5 M1480.5,189 L1473,195.5" stroke="#f2f2f2" stroke-width="2.2"/>
<circle cx="1409.8" cy="284.2" r="53" fill="none" stroke="#e6ddc2" stroke-width="11"/>
<rect x="1384.5" y="257.3" width="51" height="51.2" fill="#ebe9e3" stroke="#6e6c68" stroke-width="1.2"/>
<rect x="1393.7" y="266.7" width="32" height="32" fill="#c5c9cb" />
<text x="1410.5" y="288.5" font-size="15.5" fill="#5f6366" textLength="44" lengthAdjust="spacingAndGlyphs" text-anchor="middle" >Сверху</text>
<text x="1409.8" y="234.5" font-size="20" fill="#e6dec4" textLength="12.5" lengthAdjust="spacingAndGlyphs" text-anchor="middle" stroke="#8a857a" stroke-width="0.8">С</text>
<text x="1353.3" y="291.5" font-size="20" fill="#e6dec4" textLength="11" lengthAdjust="spacingAndGlyphs" text-anchor="middle" stroke="#8a857a" stroke-width="0.8">З</text>
<text x="1466" y="291.5" font-size="20" fill="#e6dec4" textLength="12" lengthAdjust="spacingAndGlyphs" text-anchor="middle" stroke="#8a857a" stroke-width="0.8">В</text>
<text x="1409.8" y="348" font-size="20" fill="#e6dec4" textLength="17" lengthAdjust="spacingAndGlyphs" text-anchor="middle" stroke="#8a857a" stroke-width="0.8">Ю</text>
<path d="M1403.5,243.5 L1416,243.5 L1409.8,250 Z" fill="#f2efe6" stroke="#b0aba0" stroke-width="0.6"/>
<path d="M1403.5,323 L1416,323 L1409.8,316.5 Z" fill="#f2efe6" stroke="#b0aba0" stroke-width="0.6"/>
<path d="M1371,277.5 L1377,283.8 L1371,290 Z" fill="#f2efe6" stroke="#8f8a80" stroke-width="0.7"/>
<path d="M1449,277.5 L1443,283.8 L1449,290 Z" fill="#f2efe6" stroke="#8f8a80" stroke-width="0.7"/>
<path d="M1341,218 L1346.5,212 L1352,218 L1350.5,218 L1350.5,223 L1342.5,223 L1342.5,218 Z" fill="#ece6d2"/><rect x="1345.5" y="219" width="2.5" height="4" fill="#c8c0a8"/>
<path d="M1453,213 Q1462,211 1468,216" stroke="#e8e1ca" stroke-width="3.5" fill="none"/><path d="M1450,212.5 L1456,208.5 L1455,217 Z" fill="#e8e1ca"/>
<path d="M1475,223 Q1480,230 1480,238" stroke="#e8e1ca" stroke-width="3.5" fill="none"/><path d="M1476,236 L1484,236 L1480,243 Z" fill="#e8e1ca"/>
<path d="M1470,343.5 L1481,343.5 L1475.5,348 Z" fill="#ece6d2"/><rect x="1470" y="341" width="11" height="1.2" fill="#ece6d2"/>
<rect x="1372.4" y="371.3" width="73.6" height="14.4" rx="2.5" fill="#e5e1d6"/>
<text x="1377" y="382" font-size="11" fill="#55575a" textLength="50" lengthAdjust="spacingAndGlyphs" >Без имени</text>
<path d="M1432,375.5 L1442,375.5 L1437,381.5 Z" fill="none" stroke="#6a6c70" stroke-width="0.9"/>
<g stroke="#111" stroke-width="1.4" fill="none"><path d="M22.5,936 L22.5,986 L72.5,986"/><rect x="18.3" y="981.3" width="9.3" height="9.3"/><path d="M77.5,972.5 L89.5,984.5 M89.5,972.5 L77.5,984.5"/><path d="M24.5,919.5 L30.5,926 L36.5,919.5 M30.5,926 L30.5,932"/></g>
<path d="M16,1008 L82,1008 L77,1024 Q76,1025 74,1025 L22,1025 Q20,1025 19,1023 Z" fill="#3b4453"/>
<path d="M85,1008 L132,1008 L130,1024 L88,1024 Z" fill="#2e3540"/>
<path d="M138,1008 L190,1008 L186,1024 L141,1024 Z" fill="#2e3540"/>
<path d="M199,1008 L218,1008 L214,1024 L196,1024 Z" fill="#2e3540"/>
<text x="25" y="1020.5" font-size="12.3" fill="#f2f2f2" textLength="46" lengthAdjust="spacingAndGlyphs" font-weight="bold" stroke="#f2f2f2" stroke-width="0.1" >Модель</text>
<text x="94" y="1020.5" font-size="12.3" fill="#c8c8c8" textLength="31" lengthAdjust="spacingAndGlyphs" stroke="#c8c8c8" stroke-width="0.1" >Лист1</text>
<text x="149" y="1020.5" font-size="12.3" fill="#c8c8c8" textLength="32" lengthAdjust="spacingAndGlyphs" stroke="#c8c8c8" stroke-width="0.1" >Лист2</text>
<path d="M203,1016 L212,1016 M207.5,1011.5 L207.5,1020.5" stroke="#c8c8c8" stroke-width="1.8"/>
<rect x="844.8" y="1009" width="56.10000000000002" height="23.5" fill="#363e4b" />
<rect x="903.8" y="1009" width="62.5" height="23.5" fill="#363e4b" />
<rect x="969.7" y="1009" width="101.0" height="23.5" fill="#363e4b" />
<rect x="1073.5" y="1009" width="60.90000000000009" height="23.5" fill="#363e4b" />
<rect x="1136.6" y="1009" width="25.0" height="23.5" fill="#363e4b" />
<rect x="1162.5" y="1009" width="23.5" height="23.5" fill="#363e4b" />
<rect x="1188" y="1009" width="26" height="23.5" fill="#363e4b" />
<rect x="1215.5" y="1009" width="107.0" height="23.5" fill="#363e4b" />
<rect x="1324.3" y="1009" width="38.299999999999955" height="23.5" fill="#363e4b" />
<rect x="1363.7" y="1009" width="24.799999999999955" height="23.5" fill="#363e4b" />
<rect x="1390.8" y="1009" width="24.700000000000045" height="23.5" fill="#363e4b" />
<rect x="1417.8" y="1009" width="22.5" height="23.5" fill="#363e4b" />
<rect x="1443.2" y="1009" width="23.0" height="23.5" fill="#363e4b" />
<rect x="1468.4" y="1009" width="19.09999999999991" height="23.5" fill="#363e4b" />
<rect x="995" y="1009.5" width="21.700000000000045" height="22.5" fill="#5e8fc4" />
<rect x="1074" y="1009.5" width="21.700000000000045" height="22.5" fill="#5e8fc4" />
<rect x="1098" y="1009.5" width="21.59999999999991" height="22.5" fill="#5e8fc4" />
<rect x="1162.7" y="1009.5" width="22.09999999999991" height="22.5" fill="#5e8fc4" />
<rect x="1189.3" y="1009.5" width="22.90000000000009" height="22.5" fill="#5e8fc4" />
<rect x="1217" y="1009.5" width="21.799999999999955" height="22.5" fill="#5e8fc4" />
<text x="848.6" y="1026" font-size="12.3" fill="#ececec" textLength="49" lengthAdjust="spacingAndGlyphs" stroke="#ececec" stroke-width="0.1" >МОДЕЛЬ</text>
<g stroke="#e2e2e2" stroke-width="1.3"><path d="M911,1013.5 L911,1028 M916,1013.5 L916,1028 M921,1013.5 L921,1028 M907.5,1016.5 L923,1016.5 M907.5,1021 L923,1021 M907.5,1025.5 L923,1025.5"/></g>
<g fill="#e2e2e2"><rect x="933.5" y="1015" width="2.2" height="2.2"/><rect x="933.5" y="1020" width="2.2" height="2.2"/><rect x="933.5" y="1025" width="2.2" height="2.2"/><rect x="938.7" y="1015" width="2.2" height="2.2"/><rect x="938.7" y="1020" width="2.2" height="2.2"/><rect x="938.7" y="1025" width="2.2" height="2.2"/><rect x="943.9" y="1015" width="2.2" height="2.2"/><rect x="943.9" y="1020" width="2.2" height="2.2"/><rect x="943.9" y="1025" width="2.2" height="2.2"/></g>
<path d="M956.3,1019.24 L962.7,1019.24 L959.5,1022.92 Z" fill="#e2e2e2"/>
<path d="M1021.7,1019.24 L1028.1000000000001,1019.24 L1024.9,1022.92 Z" fill="#e2e2e2"/>
<path d="M1060.8,1019.24 L1067.2,1019.24 L1064,1022.92 Z" fill="#e2e2e2"/>
<path d="M1125.5,1019.24 L1131.9,1019.24 L1128.7,1022.92 Z" fill="#e2e2e2"/>
<path d="M1310.6,1019.24 L1317.0,1019.24 L1313.8,1022.92 Z" fill="#e2e2e2"/>
<path d="M1352.2,1019.24 L1358.6000000000001,1019.24 L1355.4,1022.92 Z" fill="#e2e2e2"/>
<path d="M974,1013 L974,1028 L989.5,1028 M974,1022 L979.5,1022 L979.5,1028" stroke="#e2e2e2" stroke-width="1.2" fill="none"/>
<circle cx="1004" cy="1021" r="6" stroke="#e2e2e2" stroke-width="1.3" fill="none"/><path d="M1000,1021 L1014,1021 M1004,1021 L1012,1012" stroke="#e2e2e2" stroke-width="1.3"/>
<path d="M1038,1014 L1050,1028" stroke="#e05050" stroke-width="1.3"/><path d="M1044,1011.5 L1044,1030" stroke="#52c060" stroke-width="1.3"/><circle cx="1044" cy="1021" r="1.6" fill="#f0f0f0"/>
<path d="M1078,1029 L1092,1016 M1078,1029 L1092,1029" stroke="#f2f2f2" stroke-width="1.4" fill="none"/><circle cx="1083.5" cy="1024" r="1.8" fill="#f2f2f2"/>
<rect x="1101.5" y="1014" width="14" height="14" stroke="#f2f2f2" stroke-width="1.4" fill="none"/><rect x="1100" y="1012.5" width="4" height="4" fill="#5e8fc4" stroke="#f2f2f2" stroke-width="1"/>
<g fill="#e2e2e2"><rect x="1141" y="1014" width="16" height="2"/><rect x="1141" y="1018.5" width="16" height="2.6"/><rect x="1141" y="1024" width="16" height="3.2"/></g><rect x="1141" y="1014" width="4.5" height="13.5" fill="#363e4b" fill-opacity="0.5"/>
<rect x="1167.5" y="1018" width="11" height="11" fill="#f2f2f2"/><rect x="1171" y="1014.5" width="10" height="10" fill="none" stroke="#f2f2f2" stroke-width="0.8"/><path d="M1165,1013.5 L1170,1013.5 M1167.5,1011 L1167.5,1016" stroke="#f2f2f2" stroke-width="1"/>
<path d="M1193.5,1029 L1193.5,1013.5 M1193.5,1029 L1208,1029" stroke="#f2f2f2" stroke-width="1.4" fill="none"/><path d="M1190.5,1017 L1193.5,1012.5 L1196.5,1017 Z M1205,1026 L1209.5,1029 L1205,1032 Z" fill="#f2f2f2"/><path d="M1201,1014 L1198,1020 L1201,1020 L1199,1025 L1204,1018.5 L1201.5,1018.5 L1203.5,1014 Z" fill="#f2f2f2"/>
<path d="M1225,1016 L1228.5,1026 L1232,1030 L1227,1028 L1225,1025 L1223,1028 L1218,1030 L1221.5,1026 Z" fill="#f2f2f2"/>
<circle cx="1233" cy="1016.5" r="2.7" fill="none" stroke="#f2f2f2" stroke-width="1"/>
<path d="M1250,1016 L1253.5,1026 L1257,1030 L1252,1028 L1250,1025 L1248,1028 L1243,1030 L1246.5,1026 Z" fill="#d0d0d0"/>
<path d="M1256,1012 L1253.5,1017 L1256,1017 L1254.5,1021 L1259,1015.5 L1256.5,1015.5 L1258,1012 Z" fill="#d0d0d0"/>
<path d="M1276,1016 L1279.5,1026 L1283,1030 L1278,1028 L1276,1025 L1274,1028 L1269,1030 L1272.5,1026 Z" fill="#d0d0d0"/>
<text x="1292.8" y="1026" font-size="12.3" fill="#e2e2e2" textLength="13.5" lengthAdjust="spacingAndGlyphs" stroke="#e2e2e2" stroke-width="0.1" >1:1</text>
<g transform="translate(1335.2,1021)"><circle r="5.6" fill="#d6d6d6"/><rect x="-1.8" y="-8" width="3.6" height="4" fill="#d6d6d6" transform="rotate(0)"/><rect x="-1.8" y="-8" width="3.6" height="4" fill="#d6d6d6" transform="rotate(45)"/><rect x="-1.8" y="-8" width="3.6" height="4" fill="#d6d6d6" transform="rotate(90)"/><rect x="-1.8" y="-8" width="3.6" height="4" fill="#d6d6d6" transform="rotate(135)"/><rect x="-1.8" y="-8" width="3.6" height="4" fill="#d6d6d6" transform="rotate(180)"/><rect x="-1.8" y="-8" width="3.6" height="4" fill="#d6d6d6" transform="rotate(225)"/><rect x="-1.8" y="-8" width="3.6" height="4" fill="#d6d6d6" transform="rotate(270)"/><rect x="-1.8" y="-8" width="3.6" height="4" fill="#d6d6d6" transform="rotate(315)"/><circle r="2.3" fill="#363e4b"/></g>
<path d="M1368,1021 L1384,1021 M1376,1013 L1376,1029" stroke="#e6e6e6" stroke-width="1.6"/>
<g stroke="#e2e2e2" stroke-width="1" fill="none"><rect x="1396" y="1013" width="6.5" height="6.5"/><circle cx="1408.5" cy="1019" r="3.5"/><path d="M1399,1029 L1402.5,1023 L1406,1029 Z"/></g>
<path d="M1421,1014 L1428,1014 L1433,1019 L1433,1028 L1421,1028 Z" fill="#5e8fc4"/><path d="M1421,1014 L1433,1028" stroke="#f0f0f0" stroke-width="0.8"/><circle cx="1425" cy="1018" r="1.5" fill="#f0f0f0"/><rect x="1418.5" y="1022" width="7.5" height="6" fill="#f0c040"/><path d="M1427,1025 L1430,1028.5 L1437,1020" stroke="#52c060" stroke-width="2" fill="none"/>
<rect x="1446.5" y="1014" width="15.5" height="14" fill="none" stroke="#e2e2e2" stroke-width="1.1"/><path d="M1449.5,1025 L1454,1020.5 M1458.5,1016.5 L1454.5,1020.5" stroke="#e2e2e2" stroke-width="1"/><path d="M1449,1026 L1449,1022.5 L1452.5,1026 Z M1459.5,1016 L1459.5,1019.5 L1456,1016 Z" fill="#e2e2e2"/>
<g fill="#e6e6e6"><rect x="1471" y="1013.5" width="15.5" height="1.8"/><rect x="1471" y="1020" width="15.5" height="1.8"/><rect x="1471" y="1026.5" width="15.5" height="1.8"/></g>
<rect x="43.6" y="424.5" width="267.2" height="377.6" fill="none" stroke="#5549cc" stroke-width="1.8"/>
<rect x="69" y="430.8" width="235.7" height="365.2" fill="none" stroke="#000" stroke-width="1.9"/>
<rect x="53.8" y="688.3" width="15" height="107.5" fill="none" stroke="#000" stroke-width="1.9"/>
<path d="M60.6,688.3 L60.6,796" stroke="#000" stroke-width="1.5" />
<path d="M53.8,719.8 L69,719.8" stroke="#000" stroke-width="1.5" />
<path d="M53.8,763.5 L69,763.5" stroke="#000" stroke-width="1.5" />
<rect x="56" y="693.8" width="4" height="19.0" fill="#000" />
<rect x="56" y="730.6" width="4" height="23.199999999999932" fill="#000" />
<rect x="56" y="768.8" width="4" height="20.0" fill="#000" />
<rect x="82" y="445.2" width="44.8" height="5.800000000000011" fill="#000" />
<rect x="82" y="452.9" width="205" height="5.2000000000000455" fill="#000" />
<rect x="82" y="461" width="44" height="4.899999999999977" fill="#000" />
<rect x="82" y="472" width="144.7" height="4.800000000000011" fill="#000" />
<rect x="82" y="481" width="188" height="4.800000000000011" fill="#000" />
<rect x="82" y="489.3" width="139.8" height="4.699999999999989" fill="#000" />
<rect x="82" y="498.3" width="209" height="4.5" fill="#000" />
<rect x="82" y="506.2" width="14.5" height="4.800000000000011" fill="#000" />
<rect x="82" y="514.9" width="193" height="4.7000000000000455" fill="#000" />
<rect x="82" y="523.4" width="124.6" height="4.300000000000068" fill="#000" />
<rect x="82" y="532" width="208.5" height="4.899999999999977" fill="#000" />
<rect x="82" y="540" width="196.8" height="4.7000000000000455" fill="#000" />
<rect x="82" y="548" width="158.8" height="5" fill="#000" />
<rect x="82" y="557" width="118.9" height="4.600000000000023" fill="#000" />
<rect x="82" y="566" width="112" height="4.600000000000023" fill="#000" />
<rect x="82" y="575" width="198" height="4.7000000000000455" fill="#000" />
<path d="M82,451.8 L127,451.8" stroke="#000" stroke-width="0.8" />
<rect x="193" y="532" width="1" height="5" fill="#dfd5b0" />
<path d="M69,726 L304.7,726" stroke="#000" stroke-width="1.7" />
<path d="M81.9,726 L81.9,757.5" stroke="#000" stroke-width="1.4" />
<path d="M95,726 L95,757.5" stroke="#000" stroke-width="1.4" />
<path d="M107.5,726 L107.5,757.5" stroke="#000" stroke-width="1.4" />
<path d="M120.6,726 L120.6,757.5" stroke="#000" stroke-width="1.4" />
<path d="M139.4,726 L139.4,757.5" stroke="#000" stroke-width="1.4" />
<path d="M152.3,726 L152.3,796" stroke="#000" stroke-width="1.7" />
<path d="M95,757.5 L95,796" stroke="#000" stroke-width="1.4" />
<path d="M120.6,757.5 L120.6,796" stroke="#000" stroke-width="1.4" />
<path d="M139.4,757.5 L139.4,796" stroke="#000" stroke-width="1.4" />
<path d="M69,732.3 L152.3,732.3" stroke="#000" stroke-width="0.9" />
<path d="M69,738.5 L152.3,738.5" stroke="#000" stroke-width="0.9" />
<path d="M69,745 L152.3,745" stroke="#000" stroke-width="0.9" />
<path d="M69,751 L152.3,751" stroke="#000" stroke-width="1.6" />
<path d="M69,757.5 L304.7,757.5" stroke="#000" stroke-width="1.6" />
<path d="M69,764.4 L152.3,764.4" stroke="#000" stroke-width="0.9" />
<path d="M69,770.6 L152.3,770.6" stroke="#000" stroke-width="0.9" />
<path d="M69,776.9 L152.3,776.9" stroke="#000" stroke-width="0.9" />
<path d="M69,783.5 L152.3,783.5" stroke="#000" stroke-width="0.9" />
<path d="M69,789.8 L152.3,789.8" stroke="#000" stroke-width="0.9" />
<path d="M152.3,738.7 L304.7,738.7" stroke="#000" stroke-width="1.7" />
<path d="M152.3,776.9 L304.7,776.9" stroke="#000" stroke-width="1.7" />
<path d="M241.4,757.9 L241.4,796" stroke="#000" stroke-width="1.6" />
<path d="M260.4,757.9 L260.4,776.9" stroke="#000" stroke-width="1.3" />
<path d="M279.7,757.9 L279.7,776.9" stroke="#000" stroke-width="1.3" />
<path d="M241.4,763.8 L304.7,763.8" stroke="#000" stroke-width="1.1" />
<rect x="71" y="751.5" width="8" height="5.0" fill="#000" />
<rect x="83.5" y="751.5" width="10.0" height="5.0" fill="#000" />
<rect x="96.5" y="751.5" width="9.0" height="5.0" fill="#000" />
<rect x="108.5" y="751.5" width="10.5" height="5.0" fill="#000" />
<rect x="122" y="751.5" width="15.5" height="5.0" fill="#000" />
<rect x="141" y="751.5" width="9.5" height="5.0" fill="#000" />
<rect x="71" y="758.5" width="22.5" height="4.5" fill="#000" />
<rect x="71" y="765" width="18" height="4.5" fill="#000" />
<rect x="71" y="777.5" width="22" height="4.5" fill="#000" />
<rect x="71" y="784" width="18" height="4.5" fill="#000" />
<rect x="243" y="758.5" width="15" height="4.7999999999999545" fill="#000" />
<rect x="265" y="758.5" width="10" height="4.7999999999999545" fill="#000" />
<rect x="284" y="758.5" width="16" height="4.7999999999999545" fill="#000" />
<rect x="250" y="767.5" width="2.5" height="4.0" fill="#000" />
<rect x="267" y="767.3" width="5" height="4.2000000000000455" fill="#000" />
<rect x="292" y="767.5" width="1.5" height="4.0" fill="#000" />
<text x="196.5" y="789.8" font-size="5.6" fill="#1a1a1a" textLength="37" lengthAdjust="spacingAndGlyphs" font-weight="bold" text-anchor="middle" >Общие данные</text>
<path d="M271.3,783 L274.3,783 L276.5,788.5 L279,794.5 L276.8,795 L272.8,788.5 L268.8,795 L266.5,794.5 L269.1,788.5 Z" fill="#000"/><path d="M268,790 L277.5,790" stroke="#000" stroke-width="1.6"/><circle cx="272.8" cy="781.4" r="2.4" fill="#000"/><circle cx="272.8" cy="787" r="1" fill="#777"/>
<rect x="243" y="796" width="17.69999999999999" height="4.7000000000000455" fill="#000" />
<defs><pattern id="hatch" width="2.4" height="2.4" patternUnits="userSpaceOnUse" patternTransform="rotate(45)"><rect width="2.4" height="2.4" fill="#2e2a24"/><rect x="0.15" y="0.15" width="1.45" height="1.45" fill="#c4bc9c"/></pattern></defs>
<rect x="343.6" y="424.5" width="535.2" height="377.6" fill="none" stroke="#5549cc" stroke-width="1.8"/>
<rect x="369" y="430.8" width="503.5" height="365.2" fill="none" stroke="#000" stroke-width="1.9"/>
<rect x="353.8" y="688.3" width="15" height="107.5" fill="none" stroke="#000" stroke-width="1.9"/>
<path d="M360.6,688.3 L360.6,796" stroke="#000" stroke-width="1.5" />
<path d="M353.8,719.8 L369,719.8" stroke="#000" stroke-width="1.5" />
<path d="M353.8,763.5 L369,763.5" stroke="#000" stroke-width="1.5" />
<rect x="356" y="693.8" width="4" height="19.0" fill="#000" />
<rect x="356" y="730.6" width="4" height="23.199999999999932" fill="#000" />
<rect x="356" y="768.8" width="4" height="20.0" fill="#000" />
<path d="M636.8,430.8 L636.8,500.3" stroke="#000" stroke-width="1.6" />
<path d="M649.4,430.8 L649.4,500.3" stroke="#000" stroke-width="1.6" />
<path d="M685.3,430.8 L685.3,500.3" stroke="#000" stroke-width="1.6" />
<path d="M812.6,430.8 L812.6,500.3" stroke="#000" stroke-width="1.6" />
<path d="M825.3,430.8 L825.3,500.3" stroke="#000" stroke-width="1.6" />
<path d="M636.8,448.9 L872.5,448.9" stroke="#000" stroke-width="1.6" />
<path d="M636.8,459.3 L872.5,459.3" stroke="#000" stroke-width="1.0" />
<path d="M636.8,469.6 L872.5,469.6" stroke="#000" stroke-width="1.0" />
<path d="M636.8,480 L872.5,480" stroke="#000" stroke-width="1.0" />
<path d="M636.8,490.3 L872.5,490.3" stroke="#000" stroke-width="1.0" />
<path d="M636.8,500.3 L872.5,500.3" stroke="#000" stroke-width="1.7" />
<rect x="685.8" y="452" width="124.5" height="4" fill="#000" />
<rect x="685.8" y="462" width="93.20000000000005" height="4" fill="#000" />
<rect x="686.7" y="473.8" width="125.29999999999995" height="4.199999999999989" fill="#000" />
<rect x="686.7" y="483.7" width="45.299999999999955" height="4.300000000000011" fill="#000" />
<rect x="686.7" y="493.6" width="80.29999999999995" height="4.399999999999977" fill="#000" />
<rect x="641.8" y="452.5" width="3.2000000000000455" height="3.3999999999999773" fill="#000" />
<rect x="817.9" y="452.5" width="3.1000000000000227" height="3.3999999999999773" fill="#000" />
<rect x="641.8" y="473.5" width="3.2000000000000455" height="3.3999999999999773" fill="#000" />
<rect x="817.9" y="473.5" width="3.1000000000000227" height="3.3999999999999773" fill="#000" />
<rect x="641.8" y="483.5" width="3.2000000000000455" height="3.3999999999999773" fill="#000" />
<rect x="817.9" y="483.5" width="3.1000000000000227" height="3.3999999999999773" fill="#000" />
<rect x="641.8" y="493.5" width="3.2000000000000455" height="3.3999999999999773" fill="#000" />
<rect x="817.9" y="493.5" width="3.1000000000000227" height="3.3999999999999773" fill="#000" />
<text x="643.1" y="443.2" font-size="5.2" fill="#111" textLength="10" lengthAdjust="spacingAndGlyphs" font-weight="bold" text-anchor="middle" >Поз.</text>
<text x="667.4" y="443.2" font-size="5.2" fill="#111" textLength="32" lengthAdjust="spacingAndGlyphs" font-weight="bold" text-anchor="middle" >Обозначение</text>
<text x="749" y="443.2" font-size="5.2" fill="#111" textLength="37" lengthAdjust="spacingAndGlyphs" font-weight="bold" text-anchor="middle" >Наименование</text>
<text x="818.9" y="443.2" font-size="5.2" fill="#111" textLength="9" lengthAdjust="spacingAndGlyphs" font-weight="bold" text-anchor="middle" >Кол.</text>
<text x="849" y="443.2" font-size="5.2" fill="#111" textLength="30" lengthAdjust="spacingAndGlyphs" font-weight="bold" text-anchor="middle" >Примечание</text>
<rect x="636" y="705.3" width="45.700000000000045" height="5.400000000000091" fill="#000" />
<rect x="636" y="713" width="121" height="4.600000000000023" fill="#000" />
<rect x="636" y="721" width="114" height="4.7000000000000455" fill="#000" />
<rect x="636" y="729" width="200" height="4.7999999999999545" fill="#000" />
<rect x="636" y="737" width="202" height="4.7999999999999545" fill="#000" />
<rect x="642" y="745" width="99.79999999999995" height="4.5" fill="#000" />
<rect x="636" y="753" width="211" height="4.600000000000023" fill="#000" />
<rect x="642" y="761" width="117" height="4.7999999999999545" fill="#000" />
<rect x="749" y="753" width="1.2" height="4.6" fill="#dfd5b0" />
<path d="M636,776.6 L872.5,776.6" stroke="#000" stroke-width="1.7" />
<path d="M636,776.6 L636,796" stroke="#000" stroke-width="1.7" />
<path d="M649.4,776.6 L649.4,796" stroke="#000" stroke-width="1.3" />
<path d="M662.7,776.6 L662.7,796" stroke="#000" stroke-width="1.3" />
<path d="M675.4,776.6 L675.4,796" stroke="#000" stroke-width="1.3" />
<path d="M688.2,776.6 L688.2,796" stroke="#000" stroke-width="1.3" />
<path d="M707.1,776.6 L707.1,796" stroke="#000" stroke-width="1.3" />
<path d="M720.1,776.6 L720.1,796" stroke="#000" stroke-width="1.7" />
<path d="M636,783 L720.1,783" stroke="#000" stroke-width="0.9" />
<path d="M636,789.5 L720.1,789.5" stroke="#000" stroke-width="1.4" />
<rect x="638" y="790" width="9" height="5" fill="#000" />
<rect x="650.5" y="790" width="10.5" height="5" fill="#000" />
<rect x="664" y="790" width="9.5" height="5" fill="#000" />
<rect x="676.5" y="790" width="10.5" height="5" fill="#000" />
<rect x="689.5" y="790" width="16.0" height="5" fill="#000" />
<rect x="708.5" y="790" width="10.0" height="5" fill="#000" />
<path d="M860,776.6 L860,796" stroke="#000" stroke-width="1.6" />
<path d="M860,786.3 L872.5,786.3" stroke="#000" stroke-width="1.4" />
<rect x="862.5" y="777.5" width="8.5" height="7.5" fill="#000" />
<rect x="862.8" y="788.5" width="7.5" height="6" fill="none" stroke="#000" stroke-width="1.3"/>
<rect x="864.8" y="790.5" width="3.400000000000091" height="2.5" fill="#000" />
<rect x="811" y="796.4" width="18" height="4.600000000000023" fill="#000" />
<rect x="911.6" y="424.5" width="535.2" height="377.6" fill="none" stroke="#5549cc" stroke-width="1.8"/>
<rect x="937" y="430.8" width="503.5" height="365.2" fill="none" stroke="#000" stroke-width="1.9"/>
<rect x="921.8" y="688.3" width="15" height="107.5" fill="none" stroke="#000" stroke-width="1.9"/>
<path d="M928.6,688.3 L928.6,796" stroke="#000" stroke-width="1.5" />
<path d="M921.8,719.8 L937,719.8" stroke="#000" stroke-width="1.5" />
<path d="M921.8,763.5 L937,763.5" stroke="#000" stroke-width="1.5" />
<rect x="924" y="693.8" width="4" height="19.0" fill="#000" />
<rect x="924" y="730.6" width="4" height="23.199999999999932" fill="#000" />
<rect x="924" y="768.8" width="4" height="20.0" fill="#000" />
<path d="M1204.8,430.8 L1204.8,500.3" stroke="#000" stroke-width="1.6" />
<path d="M1217.4,430.8 L1217.4,500.3" stroke="#000" stroke-width="1.6" />
<path d="M1253.3,430.8 L1253.3,500.3" stroke="#000" stroke-width="1.6" />
<path d="M1380.6,430.8 L1380.6,500.3" stroke="#000" stroke-width="1.6" />
<path d="M1393.3,430.8 L1393.3,500.3" stroke="#000" stroke-width="1.6" />
<path d="M1204.8,448.9 L1440.5,448.9" stroke="#000" stroke-width="1.6" />
<path d="M1204.8,459.3 L1440.5,459.3" stroke="#000" stroke-width="1.0" />
<path d="M1204.8,469.6 L1440.5,469.6" stroke="#000" stroke-width="1.0" />
<path d="M1204.8,480 L1440.5,480" stroke="#000" stroke-width="1.0" />
<path d="M1204.8,490.3 L1440.5,490.3" stroke="#000" stroke-width="1.0" />
<path d="M1204.8,500.3 L1440.5,500.3" stroke="#000" stroke-width="1.7" />
<rect x="1253.8" y="452" width="124.5" height="4" fill="#000" />
<rect x="1253.8" y="462" width="93.20000000000005" height="4" fill="#000" />
<rect x="1254.7" y="473.8" width="125.29999999999995" height="4.199999999999989" fill="#000" />
<rect x="1254.7" y="483.7" width="45.299999999999955" height="4.300000000000011" fill="#000" />
<rect x="1254.7" y="493.6" width="80.29999999999995" height="4.399999999999977" fill="#000" />
<rect x="1209.8" y="452.5" width="3.2000000000000455" height="3.3999999999999773" fill="#000" />
<rect x="1385.9" y="452.5" width="3.099999999999909" height="3.3999999999999773" fill="#000" />
<rect x="1209.8" y="473.5" width="3.2000000000000455" height="3.3999999999999773" fill="#000" />
<rect x="1385.9" y="473.5" width="3.099999999999909" height="3.3999999999999773" fill="#000" />
<rect x="1209.8" y="483.5" width="3.2000000000000455" height="3.3999999999999773" fill="#000" />
<rect x="1385.9" y="483.5" width="3.099999999999909" height="3.3999999999999773" fill="#000" />
<rect x="1209.8" y="493.5" width="3.2000000000000455" height="3.3999999999999773" fill="#000" />
<rect x="1385.9" y="493.5" width="3.099999999999909" height="3.3999999999999773" fill="#000" />
<text x="1211.1" y="443.2" font-size="5.2" fill="#111" textLength="10" lengthAdjust="spacingAndGlyphs" font-weight="bold" text-anchor="middle" >Поз.</text>
<text x="1235.4" y="443.2" font-size="5.2" fill="#111" textLength="32" lengthAdjust="spacingAndGlyphs" font-weight="bold" text-anchor="middle" >Обозначение</text>
<text x="1317" y="443.2" font-size="5.2" fill="#111" textLength="37" lengthAdjust="spacingAndGlyphs" font-weight="bold" text-anchor="middle" >Наименование</text>
<text x="1386.9" y="443.2" font-size="5.2" fill="#111" textLength="9" lengthAdjust="spacingAndGlyphs" font-weight="bold" text-anchor="middle" >Кол.</text>
<text x="1417" y="443.2" font-size="5.2" fill="#111" textLength="30" lengthAdjust="spacingAndGlyphs" font-weight="bold" text-anchor="middle" >Примечание</text>
<rect x="1204" y="705.3" width="45.700000000000045" height="5.400000000000091" fill="#000" />
<rect x="1204" y="713" width="121" height="4.600000000000023" fill="#000" />
<rect x="1204" y="721" width="114" height="4.7000000000000455" fill="#000" />
<rect x="1204" y="729" width="200" height="4.7999999999999545" fill="#000" />
<rect x="1204" y="737" width="202" height="4.7999999999999545" fill="#000" />
<rect x="1210" y="745" width="99.79999999999995" height="4.5" fill="#000" />
<rect x="1204" y="753" width="211" height="4.600000000000023" fill="#000" />
<rect x="1210" y="761" width="117" height="4.7999999999999545" fill="#000" />
<rect x="1317" y="753" width="1.2" height="4.6" fill="#dfd5b0" />
<path d="M1204,776.6 L1440.5,776.6" stroke="#000" stroke-width="1.7" />
<path d="M1204,776.6 L1204,796" stroke="#000" stroke-width="1.7" />
<path d="M1217.4,776.6 L1217.4,796" stroke="#000" stroke-width="1.3" />
<path d="M1230.7,776.6 L1230.7,796" stroke="#000" stroke-width="1.3" />
<path d="M1243.4,776.6 L1243.4,796" stroke="#000" stroke-width="1.3" />
<path d="M1256.2,776.6 L1256.2,796" stroke="#000" stroke-width="1.3" />
<path d="M1275.1,776.6 L1275.1,796" stroke="#000" stroke-width="1.3" />
<path d="M1288.1,776.6 L1288.1,796" stroke="#000" stroke-width="1.7" />
<path d="M1204,783 L1288.1,783" stroke="#000" stroke-width="0.9" />
<path d="M1204,789.5 L1288.1,789.5" stroke="#000" stroke-width="1.4" />
<rect x="1206" y="790" width="9" height="5" fill="#000" />
<rect x="1218.5" y="790" width="10.5" height="5" fill="#000" />
<rect x="1232" y="790" width="9.5" height="5" fill="#000" />
<rect x="1244.5" y="790" width="10.5" height="5" fill="#000" />
<rect x="1257.5" y="790" width="16.0" height="5" fill="#000" />
<rect x="1276.5" y="790" width="10.0" height="5" fill="#000" />
<path d="M1428,776.6 L1428,796" stroke="#000" stroke-width="1.6" />
<path d="M1428,786.3 L1440.5,786.3" stroke="#000" stroke-width="1.4" />
<rect x="1430.5" y="777.5" width="8.5" height="7.5" fill="#000" />
<rect x="1430.8" y="788.5" width="7.5" height="6" fill="none" stroke="#000" stroke-width="1.3"/>
<rect x="1432.8" y="790.5" width="3.400000000000091" height="2.5" fill="#000" />
<rect x="1379" y="796.4" width="18" height="4.600000000000023" fill="#000" />
<rect x="434.1" y="434" width="82.69999999999993" height="3.8000000000000114" fill="#000" />
<rect x="429" y="439" width="92.79999999999995" height="5" fill="#000" />
<rect x="433" y="448" width="85" height="5" fill="#000" />
<rect x="468" y="454" width="15" height="5" fill="#000" />
<path d="M408,539.6 L542.5,539.6 M408,580.3 L542.5,580.3" stroke="#12100d" stroke-width="1.49" fill="none" />
<path d="M530,539 L530,532.5 L545.6,532.5 M528,537 L530,539.5 L532,537" stroke="#12100d" stroke-width="0.9" fill="none" />
<path d="M530,580 L530,573 L545.6,573 M528,578 L530,580.3 L532,578" stroke="#12100d" stroke-width="0.9" fill="none" />
<text x="530.5" y="530.8" font-size="4.5" fill="#333" textLength="13" lengthAdjust="spacingAndGlyphs" >0.000</text>
<text x="530.5" y="571.5" font-size="4.5" fill="#333" textLength="15" lengthAdjust="spacingAndGlyphs" >-3.300</text>
<path d="M435,514 L435,477.5 Q435,466.5 446,466.5 L478,466.5 Q489,466.5 489,477.5 L489,541.5" stroke="#12100d" stroke-width="1.49" fill="none" />
<path d="M443.7,514 L443.7,477.5 Q443.7,475 446,475 L478,475 Q480,475 480,477.5 L480,541.5" stroke="#12100d" stroke-width="1.49" fill="none" />
<path d="M435,477.8 L443.7,477.8 M446,466.5 L446,475 M466.3,466.5 L466.3,475 M468,467 Q465,471 468,475 M478,466.5 Q473,471 478,475 M480,477.8 L489,477.8 M480,541.5 L489,541.5" stroke="#12100d" stroke-width="1.26" fill="none" />
<path d="M480,541.5 Q480,549 486,555 L501.5,568.5 Q503.5,570 506,570 L517,570 Q518.5,566.3 517,562.5 L507.5,562.5 L489,544" stroke="#12100d" stroke-width="1.49" fill="none" />
<path d="M485.5,551 L491,545.5 M499.5,566.5 L505.5,561.5 M509.5,562.5 L509.5,570" stroke="#12100d" stroke-width="1.26" fill="none" />
<path d="M435,514 L435,516.5 M443.7,514 L443.7,517 M435,514 L443.7,514" stroke="#12100d" stroke-width="1.26" fill="none" />
<path d="M428.7,516.5 L437.5,516.5 Q443.7,516.5 443.7,521 Q443.7,525.6 437.5,525.6 L428.7,525.6 Z M430.8,516.5 L430.8,525.6" stroke="#12100d" stroke-width="1.32" fill="none" />
<path d="M419,516.5 L427.5,525.6 L427.5,516.5 L419,525.6 Z" stroke="#12100d" stroke-width="1.26" fill="none" />
<path d="M418.5,516.5 Q414.5,517 414,520 Q415.5,522 413.5,524 Q415,525.6 418.5,525.6" stroke="#12100d" stroke-width="1.15" fill="none" />
<text x="415" y="515" font-size="4.6" fill="#333" textLength="19" lengthAdjust="spacingAndGlyphs" >ОС-30А</text>
<rect x="494" y="490" width="33.799999999999955" height="5.300000000000011" fill="#000" />
<path d="M485,500 L494,494.8" stroke="#12100d" stroke-width="1.15" fill="none" />
<path d="M485,505.5 L485,496" stroke="#12100d" stroke-width="1.49" fill="none" />
<path d="M483.5,499 L485,494.5 L486.5,499 Z" stroke="#12100d" stroke-width="0.8" fill="#12100d" />
<rect x="495" y="509" width="39" height="4.7999999999999545" fill="#000" />
<path d="M486,520 L495,513" stroke="#12100d" stroke-width="1.15" fill="none" />
<text x="468" y="514.5" font-size="4.6" fill="#333" textLength="3.3" lengthAdjust="spacingAndGlyphs" >А</text>
<path d="M472,513.5 L475,513.5 Q479,513.5 483,521" stroke="#12100d" stroke-width="1.15" fill="none" />
<circle cx="485.2" cy="523.1" r="2.5" fill="none" stroke="#1c1a16" stroke-width="1"/>
<path d="M487.7,523.5 L497.5,523.5 L495.6,522 M495.6,523.5 L495.6,541.5" stroke="#12100d" stroke-width="0.9" fill="none" />
<rect x="492" y="526" width="4" height="9.600000000000023" fill="#000" />
<rect x="427" y="590" width="97" height="5" fill="#000" />
<rect x="470" y="596" width="10" height="5" fill="#000" />
<rect x="382.2" y="629" width="16.3" height="153.5" fill="url(#hatch)" />
<rect x="553.4" y="629.4" width="15.2" height="153" fill="url(#hatch)" />
<path d="M382.2,629 L382.2,782.4 L569,782.4 L569,629.4 M382.2,629 L555.6,629 M396.3,629 L396.3,782.4 M555.6,629 L555.6,782.4" stroke="#12100d" stroke-width="1.38" fill="none" />
<path d="M382.2,613.8 L569.5,613.8 M382.2,609 L382.2,629 M396.3,609 L396.3,629 M555.6,609 L555.6,629 M568.6,609 L568.6,629" stroke="#12100d" stroke-width="0.9" fill="none" />
<text x="386" y="612" font-size="4.5" fill="#333" textLength="6" lengthAdjust="spacingAndGlyphs" >50</text>
<text x="470.5" y="612" font-size="4.5" fill="#333" textLength="9" lengthAdjust="spacingAndGlyphs" >630</text>
<text x="558.5" y="612" font-size="4.5" fill="#333" textLength="6" lengthAdjust="spacingAndGlyphs" >50</text>
<path d="M475.5,616 L475.5,788" stroke="#3434d0" stroke-width="1.3" fill="none" stroke-dasharray="20 1.5 2 1.5"/>
<path d="M568.6,645.5 Q583,650 584.4,664 L574,674 L568.6,676 Z" fill="#34302b"/>
<path d="M568.6,650 L580,662" stroke="#8a8272" stroke-width="0.7" fill="none" />
<path d="M492.5,738.4 L569,660.8" stroke="#1c1a16" stroke-width="5.4" fill="none" />
<path d="M493,738 L569,661" stroke="#8c8898" stroke-width="3.0" fill="none" />
<path d="M493,738 L569,661" stroke="#3c34d0" stroke-width="1.0" fill="none" />
<path d="M563.5,660.5 L570.5,667.5" stroke="#2a2724" stroke-width="2.5" fill="none" />
<path d="M566,657 L575.5,666.5" stroke="#ddd6c0" stroke-width="1.8" fill="none" />
<path d="M569,659 L588,641" stroke="#1c1a16" stroke-width="4.6" fill="none" />
<path d="M569,659 L588,641" stroke="#dcd4bc" stroke-width="2.8" fill="none" />
<g transform="translate(585.5,630) rotate(-45)"><rect x="-4" y="-3.5" width="9" height="7" fill="#dcd4bc" stroke="#1c1a16" stroke-width="1.1"/><path d="M-1,-3.5 L-1,3.5 M2,-3.5 L2,3.5" stroke="#1c1a16" stroke-width="0.8"/></g>
<ellipse cx="593.8" cy="637.5" rx="3.7" ry="7.6" fill="#2a2724"/><path d="M592.5,633 L596.5,633 M592.5,637 L596.5,637 M592.5,641 L596.5,641" stroke="#8a8272" stroke-width="0.8"/>
<path d="M492.5,738.4 L539.2,738.4 M492.5,738.4 L523.6,764.4 L596.3,694.3" stroke="#12100d" stroke-width="1.26" fill="none" />
<path d="M568.6,667.3 L596,695.2 M523.6,764.4 L523.6,768" stroke="#12100d" stroke-width="1.15" fill="none" />
<rect x="576" y="607" width="25.299999999999955" height="4" fill="#000" />
<rect x="576" y="610.6" width="34.89999999999998" height="4.399999999999977" fill="#000" />
<path d="M568.6,628 L576,611.5" stroke="#12100d" stroke-width="0.9" fill="none" />
<rect x="587.3" y="650" width="27.40000000000009" height="4.7999999999999545" fill="#000" />
<rect x="587.3" y="654" width="23.600000000000023" height="3.7000000000000455" fill="#000" />
<path d="M583.5,658.7 L587.3,654.8" stroke="#12100d" stroke-width="0.9" fill="none" />
<path d="M595.5,619.2 L590.2,631.7" stroke="#12100d" stroke-width="0.9" fill="none" />
<rect x="604" y="618" width="1.7999999999999545" height="2.7000000000000455" fill="#000" />
<path d="M583.5,667.3 L595.5,671.2" stroke="#12100d" stroke-width="0.8" fill="none" />
<rect x="595" y="667.7" width="2" height="4.0" fill="#000" />
<path d="M578.7,671.2 L595.5,677.9" stroke="#12100d" stroke-width="0.8" fill="none" />
<rect x="595" y="674.4" width="2" height="4.0" fill="#000" />
<path d="M576.7,675 L595.5,684.6" stroke="#12100d" stroke-width="0.8" fill="none" />
<rect x="595" y="681.1" width="2" height="4.0" fill="#000" />
<path d="M571,689 L583.5,681.7 M583,681 L587,685" stroke="#12100d" stroke-width="0.8" fill="none" />
<text x="573" y="686" font-size="4" fill="#333" textLength="5" lengthAdjust="spacingAndGlyphs" transform="rotate(-45 575 684)">50</text>
<rect x="1027" y="434" width="83" height="3.8000000000000114" fill="#000" />
<rect x="1022" y="439" width="93" height="5" fill="#000" />
<rect x="1026" y="448" width="85" height="4.699999999999989" fill="#000" />
<rect x="1061" y="454" width="15" height="4.800000000000011" fill="#000" />
<path d="M984.3,486.2 L1154,486.2 M984.3,526.8 L1154,526.8" stroke="#12100d" stroke-width="1.49" fill="none" />
<path d="M1140.6,485.8 L1140.6,478.4 L1156,478.4 M1138.6,483.5 L1140.6,486 L1142.6,483.5" stroke="#12100d" stroke-width="0.9" fill="none" />
<path d="M1140.6,526.6 L1140.6,519.2 L1156,519.2 M1138.6,524.3 L1140.6,526.8 L1142.6,524.3" stroke="#12100d" stroke-width="0.9" fill="none" />
<text x="1141" y="477.5" font-size="4.5" fill="#333" textLength="13" lengthAdjust="spacingAndGlyphs" >0.000</text>
<text x="1141" y="518.5" font-size="4.5" fill="#333" textLength="15" lengthAdjust="spacingAndGlyphs" >-3.300</text>
<path d="M1009,508.9 L1097,508.9 Q1105.4,508.9 1105.4,500 L1105.4,476 Q1105.4,459.5 1117,459.5 L1119.6,459.5" stroke="#12100d" stroke-width="1.49" fill="none" />
<path d="M1009,517 L1094,517 Q1113.4,517 1113.4,497 L1113.4,474 Q1113.4,467.9 1118,467.9 L1119.6,467.9" stroke="#12100d" stroke-width="1.49" fill="none" />
<path d="M1009,508.9 Q1006,513 1009,517 M1097,508.9 L1094,517 M1105.4,500.5 L1113.4,500.5 M1105.4,475 L1113.4,475 M1117,459.5 L1117,467.9 M1118.6,459.5 L1118.6,467.9" stroke="#12100d" stroke-width="1.26" fill="none" />
<path d="M1119.6,459.5 L1133.2,467.9 M1119.6,467.9 L1133.2,459.5 M1132.5,459.5 L1132.5,467.9 M1134.5,459.5 L1154,459.5 L1154,467.9 L1134.5,467.9 Z" stroke="#12100d" stroke-width="1.26" fill="none" />
<text x="1118" y="456.7" font-size="4.6" fill="#333" textLength="17.7" lengthAdjust="spacingAndGlyphs" >ПС-30А</text>
<rect x="984.3" y="493" width="39.5" height="4.899999999999977" fill="#000" />
<rect x="1045.5" y="497.2" width="9.200000000000045" height="5.300000000000011" fill="#000" />
<rect x="998" y="511.8" width="5.2000000000000455" height="9.800000000000011" fill="#000" />
<rect x="1001.2" y="531.2" width="34.0" height="4.899999999999977" fill="#000" />
<rect x="1083.8" y="531.2" width="4.900000000000091" height="4.899999999999977" fill="#000" />
<path d="M1028.8,502.2 L1070.2,502.2 L1070.2,518 M1003.2,508 L1003.2,527" stroke="#12100d" stroke-width="0.9" fill="none" />
<circle cx="1029" cy="508.7" r="3.4" fill="none" stroke="#1c1a16" stroke-width="1"/>
<text x="1009.5" y="503" font-size="4.6" fill="#333" textLength="3.3" lengthAdjust="spacingAndGlyphs" >А</text>
<path d="M1013.5,501.5 L1016,501.5 Q1021,502 1026.5,506 M1023.8,497.9 L1027,504" stroke="#12100d" stroke-width="1.15" fill="none" />
<path d="M1043,513.4 L1052,513.4" stroke="#12100d" stroke-width="1.26" fill="none" />
<path d="M1051,511.3 L1056,513.4 L1051,515.5 Z" stroke="#12100d" stroke-width="0.8" fill="#12100d" />
<path d="M1045.5,513.4 L1035.2,535.9 M1070.2,518 L1083.8,535.9" stroke="#12100d" stroke-width="1.15" fill="none" />
<rect x="1020" y="539.2" width="97" height="4.699999999999932" fill="#000" />
<rect x="1064" y="544.9" width="10" height="4.899999999999977" fill="#000" />
<rect x="992" y="605.8" width="153.5" height="15.7" fill="url(#hatch)" />
<rect x="992" y="776" width="153.5" height="16.2" fill="url(#hatch)" />
<path d="M992,605.8 L1145.5,605.8 L1145.5,792.2 L992,792.2 Z M992,621.5 L1145.5,621.5 M992,776 L1145.5,776" stroke="#12100d" stroke-width="1.38" fill="none" />
<path d="M977.3,605.8 L977.3,792.2 M974.8,605.8 L992,605.8 M974.8,619.3 L992,619.3 M974.8,778 L992,778 M974.8,792 L992,792" stroke="#12100d" stroke-width="0.9" fill="none" />
<text x="976" y="613" font-size="4.5" fill="#333" textLength="6" lengthAdjust="spacingAndGlyphs" transform="rotate(-90 976 612)">50</text>
<text x="976" y="699" font-size="4.5" fill="#333" textLength="9" lengthAdjust="spacingAndGlyphs" transform="rotate(-90 976 699)">630</text>
<text x="976" y="786" font-size="4.5" fill="#333" textLength="6" lengthAdjust="spacingAndGlyphs" transform="rotate(-90 976 785)">50</text>
<path d="M978.9,699 L1157.8,699" stroke="#3434d0" stroke-width="1.3" fill="none" stroke-dasharray="20 1.5 2 1.5"/>
<path d="M1056,605.8 L1055.4,589 Q1068.5,578 1083,589 L1081.8,605.8 Z" fill="#34302b"/>
<path d="M1057.5,592 L1062,600 M1060,587 L1065,596 M1073,584.5 L1080,596 M1076,585.5 L1081,593" stroke="#6e675a" stroke-width="0.8" fill="none" />
<path d="M1064,598.8 L1073.6,598.8 L1070.8,699.4 L1066.8,699.4 Z" fill="#9a9488" stroke="#1c1a16" stroke-width="1.1"/>
<path d="M1066.5,600 L1067.8,699 M1071.2,600 L1069.8,699" stroke="#3a3630" stroke-width="0.6" fill="none" />
<path d="M1068.8,596 L1068.8,699" stroke="#3434d0" stroke-width="1.0" fill="none" />
<rect x="1063.8" y="591" width="10" height="5.5" fill="#dcd4bc" />
<path d="M1063.8,591 L1073.8,591 L1073.8,596.5 L1063.8,596.5 Z M1066.5,591 L1066.5,596.5 M1071,591 L1071,596.5" stroke="#12100d" stroke-width="0.8" fill="none" />
<rect x="1066.2" y="568" width="5.3" height="21.6" fill="#dcd4bc" />
<path d="M1066.2,568 L1066.2,589.6 M1071.5,568 L1071.5,589.6" stroke="#12100d" stroke-width="1.26" fill="none" />
<g transform="translate(1068,560.4) rotate(-42)"><rect x="-7.5" y="-4.3" width="15" height="8.6" rx="3.5" fill="#2a2724"/><path d="M-5,0 L5,0" stroke="#bdb5a0" stroke-width="1.1" stroke-dasharray="1.5 1"/></g>
<path d="M1064,566 L1072,564 L1075,567.5 L1066,569 Z" fill="#dcd4bc" stroke="#1c1a16" stroke-width="0.8"/>
<rect x="1074.6" y="556.5" width="6.8" height="8.5" fill="#dcd4bc" stroke="#1c1a16" stroke-width="1.1"/><path d="M1078,556.5 L1078,565 M1080,556.5 L1080,565" stroke="#1c1a16" stroke-width="0.8"/>
<path d="M1053.8,558 L1065.4,569.6" stroke="#12100d" stroke-width="0.9" fill="none" />
<rect x="1053" y="554.2" width="1.7999999999999545" height="4.2999999999999545" fill="#000" />
<rect x="1052.8" y="576" width="2.0" height="4.5" fill="#000" />
<rect x="1052.8" y="583" width="2.0" height="4" fill="#000" />
<rect x="1052.8" y="589" width="2.0" height="5" fill="#000" />
<rect x="982" y="588.8" width="24.700000000000045" height="3.900000000000091" fill="#000" />
<rect x="982" y="593.7" width="34" height="4.399999999999977" fill="#000" />
<path d="M1016,593.7 L1028,605.8" stroke="#12100d" stroke-width="0.9" fill="none" />
<rect x="1092" y="571" width="28" height="4" fill="#000" />
<rect x="1092" y="575.5" width="24" height="4.2999999999999545" fill="#000" />
<path d="M1092,575.7 L1081.8,587.5" stroke="#12100d" stroke-width="0.9" fill="none" />
<path d="M1081,598 L1095.7,598 M1081,598 L1081,613 M1094.9,599 L1094.9,699.4 M1072,699.8 L1096,699.8" stroke="#12100d" stroke-width="0.9" fill="none" />
<rect x="1080.5" y="608" width="3.0" height="5" fill="#000" />
<text x="1093" y="650" font-size="4.5" fill="#333" textLength="9" lengthAdjust="spacingAndGlyphs" transform="rotate(-90 1093 650)">400</text>
</svg></body></html>
